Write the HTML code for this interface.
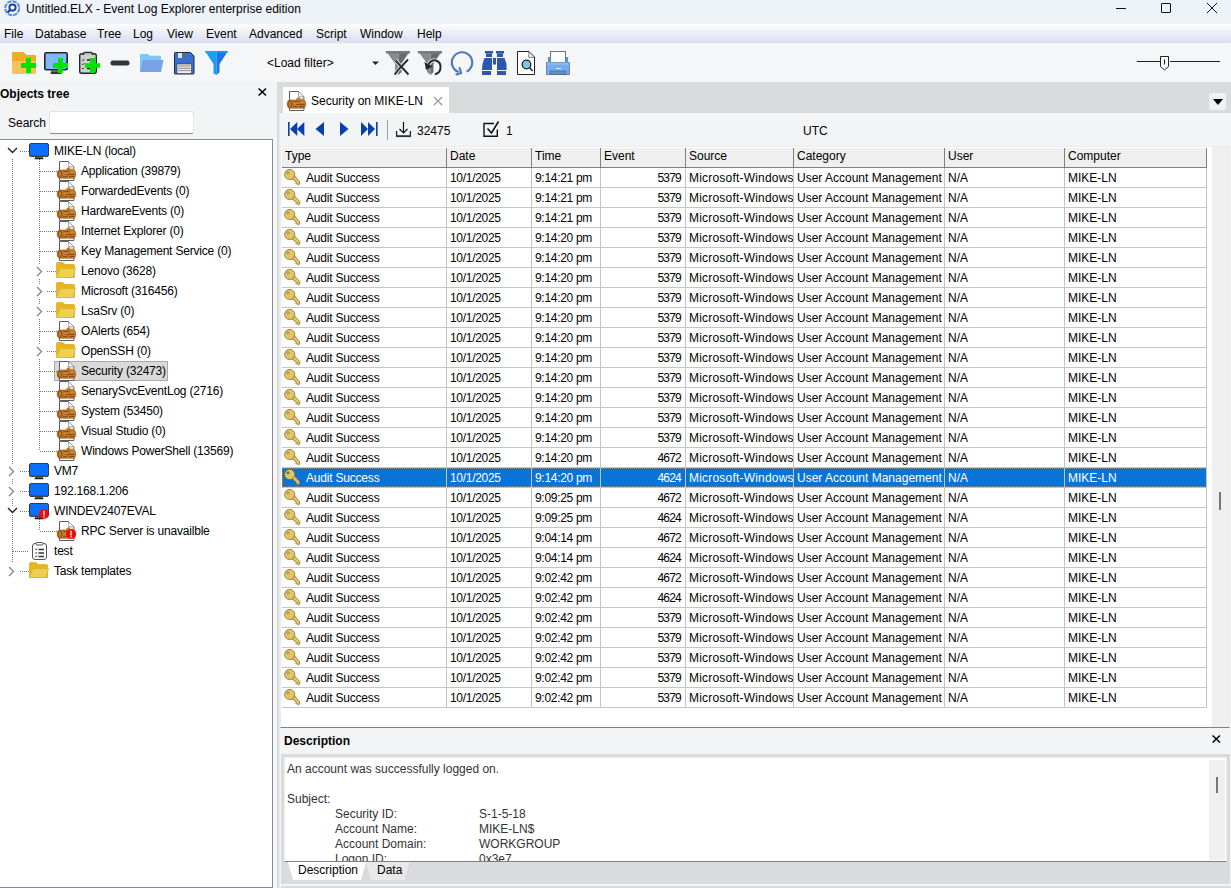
<!DOCTYPE html><html><head><meta charset="utf-8"><style>
*{box-sizing:border-box}
html,body{margin:0;padding:0}
body{width:1231px;height:888px;overflow:hidden;position:relative;background:#f3f4f6;font-family:"Liberation Sans", sans-serif;font-size:12px;color:#000}
.a{position:absolute}
.t{position:absolute;white-space:nowrap;line-height:14px}
.ic{position:absolute;overflow:visible}
</style></head><body>
<div class="a" style="left:0;top:0;width:1231px;height:24px;background:#eef2f9"></div>
<svg class="ic" style="left:3px;top:0px" width="20" height="20" viewBox="0 0 20 20"><circle cx="9.2" cy="8.2" r="7" fill="none" stroke="#5a8ed2" stroke-width="2" stroke-dasharray="4.6 0.9"/><circle cx="9.5" cy="7.6" r="3.1" fill="#fff" stroke="#1b3f9a" stroke-width="1.9"/><path d="M7.3 9.8 L4.6 12.6" stroke="#1b3f9a" stroke-width="2.1"/></svg>
<div class="t" style="left:26px;top:2px">Untitled.ELX - Event Log Explorer enterprise edition</div>
<div class="a" style="left:1116px;top:8px;width:10px;height:1px;background:#111"></div>
<div class="a" style="left:1161px;top:3px;width:10px;height:10px;border:1px solid #111;border-radius:1px"></div>
<svg class="ic" style="left:1206px;top:2px" width="12" height="12" viewBox="0 0 12 12"><path d="M1 1 L11 11 M11 1 L1 11" stroke="#111" stroke-width="1"/></svg>
<div class="a" style="left:0;top:24px;width:1231px;height:19px;background:linear-gradient(#ffffff,#f4f5fa 25%,#e6e9f4 65%,#d9ddef)"></div>
<div class="t" style="left:4px;top:27px">File</div>
<div class="t" style="left:35px;top:27px">Database</div>
<div class="t" style="left:97px;top:27px">Tree</div>
<div class="t" style="left:133px;top:27px">Log</div>
<div class="t" style="left:167px;top:27px">View</div>
<div class="t" style="left:206px;top:27px">Event</div>
<div class="t" style="left:249px;top:27px">Advanced</div>
<div class="t" style="left:316px;top:27px">Script</div>
<div class="t" style="left:360px;top:27px">Window</div>
<div class="t" style="left:417px;top:27px">Help</div>
<div class="a" style="left:0;top:43px;width:1231px;height:39px;background:#f5f6f7"></div>
<svg class="ic" style="left:0;top:43px" width="600" height="39" viewBox="0 43 600 39"><path d="M12 53.2 Q12 52 13.2 52 H23.5 L26.5 55 H34.8 Q36 55 36 56.2 V61 H12 Z" fill="#efac25"/><path d="M12 61 H36 V72.8 Q36 74 34.8 74 H13.2 Q12 74 12 72.8 Z" fill="#f5c55b"/><path d="M26 58 H31 V63 H36 V68 H31 V73 H26 V68 H21 V63 H26 Z" fill="#00e400"/><rect x="44.8" y="52.8" width="22.4" height="17" rx="1.5" fill="#80b7ff" stroke="#252525" stroke-width="1.6"/><rect x="51" y="70" width="10" height="2" fill="#666"/><rect x="50.5" y="72" width="11" height="2" rx="1" fill="#333"/><path d="M58 58 H63 V63 H68 V68 H63 V73 H58 V68 H53 V63 H58 Z" fill="#00e400"/><rect x="79.7" y="53.7" width="16.6" height="19.6" rx="2" fill="#cfcfcf" stroke="#252525" stroke-width="1.4"/><path d="M83.5 55 Q83.5 52.4 85 52.4 H91 Q92.5 52.4 92.5 55" fill="#bdbdbd" stroke="#252525" stroke-width="1.2"/><path d="M82 60 L83 60.8 L84.4 59 M82 64 L83 64.8 L84.4 63 M82 68.5 H84" stroke="#333" stroke-width="0.9" fill="none"/><path d="M87 60 H90 M87 68.5 H90" stroke="#222" stroke-width="1.3"/><path d="M90 58 H95 V63.2 H100 V67.8 H95 V73 H90 V67.8 H85 V63.2 H90 Z" fill="#00e400"/><rect x="110.5" y="60.5" width="19" height="5" rx="2.2" fill="#333"/><path d="M140 55 Q140 54 141 54 H148 L149.5 55.8 H160 Q161 55.8 161 56.8 V72 H140 Z" fill="#7cc6f7"/><path d="M143 60 H163.5 L161 72 H140 Z" fill="#78a2e6"/><path d="M174.5 53.3 Q174.5 52.5 175.3 52.5 H190.5 L194 56 V73.2 Q194 74 193.2 74 H175.3 Q174.5 74 174.5 73.2 Z" fill="#3a6ed0" stroke="#1f2a44" stroke-width="1"/><rect x="178" y="53" width="4" height="5" fill="#dfe6ee"/><rect x="182" y="53" width="3.5" height="5" fill="#5a6878"/><rect x="177" y="64" width="14.5" height="9.5" fill="#f0f0f0" stroke="#333" stroke-width="0.6"/><path d="M178 66 H190.5 M178 68.3 H190.5 M178 70.6 H190.5" stroke="#888" stroke-width="1"/><path d="M205 51 H216.5 V75 L213.5 73.5 V64 Z" fill="#1a9ef3"/><path d="M216.5 51 H228 L219.5 64 V72.3 L216.5 75 Z" fill="#1a74ec"/><rect x="205" y="51" width="23" height="2" fill="#16a8f0" opacity="0.6"/><path d="M372 61.5 H379 L375.5 65 Z" fill="#222"/><path d="M386 51 H398.5 V75 L395 72 V63.5 Z" fill="#8a8a8a"/><path d="M398.5 51 H410 L401.5 63.5 V72 L398.5 75 Z" fill="#6b6b6b"/><rect x="386" y="51" width="24" height="2.5" fill="#7a7a7a"/><path d="M395.5 60.5 L408.5 74.5 M408 59.5 L398 70 Q396.5 72.5 394.5 74.5" stroke="#f4f5f7" stroke-width="3.4" fill="none"/><path d="M395.5 60.5 L408.5 74.5 M408 59.5 L398 70 Q396.5 72.5 394.5 74.5" stroke="#2a2a2a" stroke-width="1.9" fill="none"/><path d="M418 51 H430.5 V75 L427 72 V63.5 Z" fill="#8a8a8a"/><path d="M430.5 51 H442 L433.5 63.5 V72 L430.5 75 Z" fill="#6b6b6b"/><rect x="418" y="51" width="24" height="2.5" fill="#7a7a7a"/><path d="M428.5 64.5 Q431 59.5 436 60.5 Q441 62 440.5 68 Q440 73 435 74.2" stroke="#f4f5f7" stroke-width="3.6" fill="none"/><path d="M428.5 64.5 Q431 59.5 436 60.5 Q441 62 440.5 68 Q440 73 435 74.2" stroke="#262626" stroke-width="2" fill="none"/><path d="M424.5 62 L432.5 66.5 L426 70 Z" fill="#262626"/><path d="M466.6 71.6 A10.2 10.2 0 1 0 458.7 72.1" stroke="#4c78bd" stroke-width="2.1" fill="none"/><path d="M459.4 67.2 L461.1 73 L455.6 74.8" stroke="#4c78bd" stroke-width="2.1" fill="none"/><g fill="#2a57ad"><rect x="485" y="51" width="8" height="2.5"/><rect x="486" y="53.5" width="6" height="3.5"/><rect x="496" y="51" width="8" height="2.5"/><rect x="497" y="53.5" width="6" height="3.5"/><path d="M484.5 58 H492 V70 H482 L482.5 64 Z"/><path d="M497 58 H504.5 L506.5 64 L506.5 70 H497 Z"/><rect x="493" y="58" width="3" height="6.5"/><rect x="482" y="71" width="9" height="4"/><rect x="497" y="71" width="9" height="4"/></g><path d="M517.5 51.5 H529 L534.5 57 V74.5 H517.5 Z" fill="#fff" stroke="#222" stroke-width="1"/><path d="M528.8 51.5 V57.3 H534.5" fill="none" stroke="#555" stroke-width="0.8"/><circle cx="526.5" cy="64.5" r="4.3" fill="#7cc7e6" stroke="#222" stroke-width="1.3"/><path d="M529.5 67.5 L532.5 71" stroke="#222" stroke-width="1.5"/><rect x="550.5" y="51.5" width="15" height="11" fill="#fff" stroke="#666" stroke-width="0.9"/><rect x="548" y="57" width="2.3" height="6" fill="#5f90d0"/><rect x="565.8" y="57" width="2.3" height="6" fill="#5f90d0"/><rect x="546.5" y="62.5" width="23" height="12" fill="#74acf3" stroke="#6f7f90" stroke-width="0.9"/><rect x="547" y="62.5" width="22" height="2.5" fill="#7fb9ff"/><rect x="550" y="71" width="16" height="3.5" fill="#5a8fd0" stroke="#456" stroke-width="0.5"/><rect x="556" y="68" width="5" height="1" fill="#dfeeff"/></svg>
<div class="t" style="left:267px;top:56px">&lt;Load filter&gt;</div>
<svg class="ic" style="left:1130px;top:50px" width="100" height="26" viewBox="1130 50 100 26"><path d="M1137 61.5 H1160 M1170 61.5 H1220" stroke="#222" stroke-width="1.2"/><path d="M1160.5 56.5 H1168.5 V66.5 L1164.5 70 L1160.5 66.5 Z" fill="#fff" stroke="#222" stroke-width="1"/><path d="M1164.5 59.5 V64.5" stroke="#222" stroke-width="1.2"/></svg>
<div class="t" style="left:0;top:87px;font-weight:bold;font-size:12px">Objects tree</div>
<svg class="ic" style="left:258px;top:88px" width="9" height="8" viewBox="0 0 9 8"><path d="M0.6 0.5 L8 7.5 M8 0.5 L0.6 7.5" stroke="#000" stroke-width="1.5"/></svg>
<div class="t" style="left:8px;top:116px">Search</div>
<div class="a" style="left:49px;top:111px;width:145px;height:23px;background:#fff;border:1px solid #e3e3e3;border-bottom:1px solid #8a8a8a;border-radius:3px"></div>
<div class="a" style="left:-1px;top:139px;width:274px;height:749px;background:#fff;border:1px solid #848993"></div><div class="a" style="left:273px;top:139px;width:1px;height:749px;background:#fafbfb"></div>
<div class="a" style="left:12px;top:159px;width:1px;height:403px;background:repeating-linear-gradient(180deg,#777 0 1px,transparent 1px 2px)"></div>
<div class="a" style="left:39px;top:159px;width:1px;height:292px;background:repeating-linear-gradient(180deg,#777 0 1px,transparent 1px 2px)"></div>
<div class="a" style="left:39px;top:519px;width:1px;height:12px;background:repeating-linear-gradient(180deg,#777 0 1px,transparent 1px 2px)"></div>
<div class="a" style="left:20px;top:151px;width:9px;height:1px;background:repeating-linear-gradient(90deg,#777 0 1px,transparent 1px 2px)"></div>
<div class="a" style="left:7px;top:146px;width:11px;height:9px;background:#fff"></div>
<svg class="ic" style="left:7px;top:147px" width="11" height="7" viewBox="0 0 11 7"><path d="M1 1 L5.5 5.5 L10 1" fill="none" stroke="#222" stroke-width="1.4"/></svg>
<svg class="ic" style="left:29px;top:143px" width="20" height="17"><rect x="0.5" y="0.5" width="19" height="13" rx="1.5" fill="#0a6ffa" stroke="#3a3a3a" stroke-width="1"/><rect x="1" y="12.5" width="18" height="1.5" fill="#444"/><rect x="6" y="14" width="8" height="1.5" fill="#555"/><rect x="5.5" y="15" width="9" height="1.3" rx="0.6" fill="#222"/></svg>
<div class="t" style="left:54px;top:144px;letter-spacing:-0.2px">MIKE-LN (local)</div>
<div class="a" style="left:40px;top:171px;width:17px;height:1px;background:repeating-linear-gradient(90deg,#777 0 1px,transparent 1px 2px)"></div>
<svg class="ic" style="left:57px;top:161px" width="20" height="20"><path d="M2.5 0.5 H11.6 L16.9 5.8 V19.5 H2.5 Z" fill="#fff" stroke="#5e5e5e" stroke-width="1"/><path d="M11.6 0.8 V5.8 H16.6" fill="#fff" stroke="#8a8a8a" stroke-width="0.8"/><path d="M3.2 9 H16 Q18.8 9 18.8 13.1 Q18.8 17.3 16 17.3 H3.2 Q0.2 17.3 0.2 13.1 Q0.2 9 3.2 9 Z" fill="#c07a2a" stroke="#96591c" stroke-width="0.6"/><path d="M8.5 9.3 L10 7 L12.3 6 L13.6 8 L15.6 7.6 L16 9.3 Z" fill="#c07a2a"/><ellipse cx="3" cy="13.1" rx="2" ry="3.4" fill="none" stroke="#7a4512" stroke-width="0.9"/><path d="M6.3 10.7 H12.5 M9 13.4 H17.5 M6 15.7 H10.3 M12.2 15.6 H17.4" stroke="#7a4512" stroke-width="0.9"/><path d="M6.5 12.2 H11.5 M13 11.2 H17" stroke="#dc9a4a" stroke-width="0.7"/></svg>
<div class="t" style="left:81px;top:164px;letter-spacing:-0.2px">Application (39879)</div>
<div class="a" style="left:40px;top:191px;width:17px;height:1px;background:repeating-linear-gradient(90deg,#777 0 1px,transparent 1px 2px)"></div>
<svg class="ic" style="left:57px;top:181px" width="20" height="20"><path d="M2.5 0.5 H11.6 L16.9 5.8 V19.5 H2.5 Z" fill="#fff" stroke="#5e5e5e" stroke-width="1"/><path d="M11.6 0.8 V5.8 H16.6" fill="#fff" stroke="#8a8a8a" stroke-width="0.8"/><path d="M3.2 9 H16 Q18.8 9 18.8 13.1 Q18.8 17.3 16 17.3 H3.2 Q0.2 17.3 0.2 13.1 Q0.2 9 3.2 9 Z" fill="#c07a2a" stroke="#96591c" stroke-width="0.6"/><path d="M8.5 9.3 L10 7 L12.3 6 L13.6 8 L15.6 7.6 L16 9.3 Z" fill="#c07a2a"/><ellipse cx="3" cy="13.1" rx="2" ry="3.4" fill="none" stroke="#7a4512" stroke-width="0.9"/><path d="M6.3 10.7 H12.5 M9 13.4 H17.5 M6 15.7 H10.3 M12.2 15.6 H17.4" stroke="#7a4512" stroke-width="0.9"/><path d="M6.5 12.2 H11.5 M13 11.2 H17" stroke="#dc9a4a" stroke-width="0.7"/></svg>
<div class="t" style="left:81px;top:184px;letter-spacing:-0.2px">ForwardedEvents (0)</div>
<div class="a" style="left:40px;top:211px;width:17px;height:1px;background:repeating-linear-gradient(90deg,#777 0 1px,transparent 1px 2px)"></div>
<svg class="ic" style="left:57px;top:201px" width="20" height="20"><path d="M2.5 0.5 H11.6 L16.9 5.8 V19.5 H2.5 Z" fill="#fff" stroke="#5e5e5e" stroke-width="1"/><path d="M11.6 0.8 V5.8 H16.6" fill="#fff" stroke="#8a8a8a" stroke-width="0.8"/><path d="M3.2 9 H16 Q18.8 9 18.8 13.1 Q18.8 17.3 16 17.3 H3.2 Q0.2 17.3 0.2 13.1 Q0.2 9 3.2 9 Z" fill="#c07a2a" stroke="#96591c" stroke-width="0.6"/><path d="M8.5 9.3 L10 7 L12.3 6 L13.6 8 L15.6 7.6 L16 9.3 Z" fill="#c07a2a"/><ellipse cx="3" cy="13.1" rx="2" ry="3.4" fill="none" stroke="#7a4512" stroke-width="0.9"/><path d="M6.3 10.7 H12.5 M9 13.4 H17.5 M6 15.7 H10.3 M12.2 15.6 H17.4" stroke="#7a4512" stroke-width="0.9"/><path d="M6.5 12.2 H11.5 M13 11.2 H17" stroke="#dc9a4a" stroke-width="0.7"/></svg>
<div class="t" style="left:81px;top:204px;letter-spacing:-0.2px">HardwareEvents (0)</div>
<div class="a" style="left:40px;top:231px;width:17px;height:1px;background:repeating-linear-gradient(90deg,#777 0 1px,transparent 1px 2px)"></div>
<svg class="ic" style="left:57px;top:221px" width="20" height="20"><path d="M2.5 0.5 H11.6 L16.9 5.8 V19.5 H2.5 Z" fill="#fff" stroke="#5e5e5e" stroke-width="1"/><path d="M11.6 0.8 V5.8 H16.6" fill="#fff" stroke="#8a8a8a" stroke-width="0.8"/><path d="M3.2 9 H16 Q18.8 9 18.8 13.1 Q18.8 17.3 16 17.3 H3.2 Q0.2 17.3 0.2 13.1 Q0.2 9 3.2 9 Z" fill="#c07a2a" stroke="#96591c" stroke-width="0.6"/><path d="M8.5 9.3 L10 7 L12.3 6 L13.6 8 L15.6 7.6 L16 9.3 Z" fill="#c07a2a"/><ellipse cx="3" cy="13.1" rx="2" ry="3.4" fill="none" stroke="#7a4512" stroke-width="0.9"/><path d="M6.3 10.7 H12.5 M9 13.4 H17.5 M6 15.7 H10.3 M12.2 15.6 H17.4" stroke="#7a4512" stroke-width="0.9"/><path d="M6.5 12.2 H11.5 M13 11.2 H17" stroke="#dc9a4a" stroke-width="0.7"/></svg>
<div class="t" style="left:81px;top:224px;letter-spacing:-0.2px">Internet Explorer (0)</div>
<div class="a" style="left:40px;top:251px;width:17px;height:1px;background:repeating-linear-gradient(90deg,#777 0 1px,transparent 1px 2px)"></div>
<svg class="ic" style="left:57px;top:241px" width="20" height="20"><path d="M2.5 0.5 H11.6 L16.9 5.8 V19.5 H2.5 Z" fill="#fff" stroke="#5e5e5e" stroke-width="1"/><path d="M11.6 0.8 V5.8 H16.6" fill="#fff" stroke="#8a8a8a" stroke-width="0.8"/><path d="M3.2 9 H16 Q18.8 9 18.8 13.1 Q18.8 17.3 16 17.3 H3.2 Q0.2 17.3 0.2 13.1 Q0.2 9 3.2 9 Z" fill="#c07a2a" stroke="#96591c" stroke-width="0.6"/><path d="M8.5 9.3 L10 7 L12.3 6 L13.6 8 L15.6 7.6 L16 9.3 Z" fill="#c07a2a"/><ellipse cx="3" cy="13.1" rx="2" ry="3.4" fill="none" stroke="#7a4512" stroke-width="0.9"/><path d="M6.3 10.7 H12.5 M9 13.4 H17.5 M6 15.7 H10.3 M12.2 15.6 H17.4" stroke="#7a4512" stroke-width="0.9"/><path d="M6.5 12.2 H11.5 M13 11.2 H17" stroke="#dc9a4a" stroke-width="0.7"/></svg>
<div class="t" style="left:81px;top:244px;letter-spacing:-0.2px">Key Management Service (0)</div>
<div class="a" style="left:47px;top:271px;width:10px;height:1px;background:repeating-linear-gradient(90deg,#777 0 1px,transparent 1px 2px)"></div>
<div class="a" style="left:35px;top:265px;width:9px;height:13px;background:#fff"></div>
<svg class="ic" style="left:36px;top:266px" width="7" height="11" viewBox="0 0 7 11"><path d="M1 1 L5.5 5.5 L1 10" fill="none" stroke="#888" stroke-width="1.4"/></svg>
<svg class="ic" style="left:56px;top:262px" width="20" height="17"><path d="M0.5 1.5 Q0.5 0.5 1.5 0.5 H7 L9 2.5 H17.5 Q18.5 2.5 18.5 3.5 V15.5 H0.5 Z" fill="#e8b617" stroke="#cfa013" stroke-width="0.6"/><path d="M4 6.5 H19.5 L17 15.5 H0.5 Z" fill="#edd050" stroke="#d4ae2a" stroke-width="0.6"/></svg>
<div class="t" style="left:81px;top:264px;letter-spacing:-0.2px">Lenovo (3628)</div>
<div class="a" style="left:47px;top:291px;width:10px;height:1px;background:repeating-linear-gradient(90deg,#777 0 1px,transparent 1px 2px)"></div>
<div class="a" style="left:35px;top:285px;width:9px;height:13px;background:#fff"></div>
<svg class="ic" style="left:36px;top:286px" width="7" height="11" viewBox="0 0 7 11"><path d="M1 1 L5.5 5.5 L1 10" fill="none" stroke="#888" stroke-width="1.4"/></svg>
<svg class="ic" style="left:56px;top:282px" width="20" height="17"><path d="M0.5 1.5 Q0.5 0.5 1.5 0.5 H7 L9 2.5 H17.5 Q18.5 2.5 18.5 3.5 V15.5 H0.5 Z" fill="#e8b617" stroke="#cfa013" stroke-width="0.6"/><path d="M4 6.5 H19.5 L17 15.5 H0.5 Z" fill="#edd050" stroke="#d4ae2a" stroke-width="0.6"/></svg>
<div class="t" style="left:81px;top:284px;letter-spacing:-0.2px">Microsoft (316456)</div>
<div class="a" style="left:47px;top:311px;width:10px;height:1px;background:repeating-linear-gradient(90deg,#777 0 1px,transparent 1px 2px)"></div>
<div class="a" style="left:35px;top:305px;width:9px;height:13px;background:#fff"></div>
<svg class="ic" style="left:36px;top:306px" width="7" height="11" viewBox="0 0 7 11"><path d="M1 1 L5.5 5.5 L1 10" fill="none" stroke="#888" stroke-width="1.4"/></svg>
<svg class="ic" style="left:56px;top:302px" width="20" height="17"><path d="M0.5 1.5 Q0.5 0.5 1.5 0.5 H7 L9 2.5 H17.5 Q18.5 2.5 18.5 3.5 V15.5 H0.5 Z" fill="#e8b617" stroke="#cfa013" stroke-width="0.6"/><path d="M4 6.5 H19.5 L17 15.5 H0.5 Z" fill="#edd050" stroke="#d4ae2a" stroke-width="0.6"/></svg>
<div class="t" style="left:81px;top:304px;letter-spacing:-0.2px">LsaSrv (0)</div>
<div class="a" style="left:40px;top:331px;width:17px;height:1px;background:repeating-linear-gradient(90deg,#777 0 1px,transparent 1px 2px)"></div>
<svg class="ic" style="left:57px;top:321px" width="20" height="20"><path d="M2.5 0.5 H11.6 L16.9 5.8 V19.5 H2.5 Z" fill="#fff" stroke="#5e5e5e" stroke-width="1"/><path d="M11.6 0.8 V5.8 H16.6" fill="#fff" stroke="#8a8a8a" stroke-width="0.8"/><path d="M3.2 9 H16 Q18.8 9 18.8 13.1 Q18.8 17.3 16 17.3 H3.2 Q0.2 17.3 0.2 13.1 Q0.2 9 3.2 9 Z" fill="#c07a2a" stroke="#96591c" stroke-width="0.6"/><path d="M8.5 9.3 L10 7 L12.3 6 L13.6 8 L15.6 7.6 L16 9.3 Z" fill="#c07a2a"/><ellipse cx="3" cy="13.1" rx="2" ry="3.4" fill="none" stroke="#7a4512" stroke-width="0.9"/><path d="M6.3 10.7 H12.5 M9 13.4 H17.5 M6 15.7 H10.3 M12.2 15.6 H17.4" stroke="#7a4512" stroke-width="0.9"/><path d="M6.5 12.2 H11.5 M13 11.2 H17" stroke="#dc9a4a" stroke-width="0.7"/></svg>
<div class="t" style="left:81px;top:324px;letter-spacing:-0.2px">OAlerts (654)</div>
<div class="a" style="left:47px;top:351px;width:10px;height:1px;background:repeating-linear-gradient(90deg,#777 0 1px,transparent 1px 2px)"></div>
<div class="a" style="left:35px;top:345px;width:9px;height:13px;background:#fff"></div>
<svg class="ic" style="left:36px;top:346px" width="7" height="11" viewBox="0 0 7 11"><path d="M1 1 L5.5 5.5 L1 10" fill="none" stroke="#888" stroke-width="1.4"/></svg>
<svg class="ic" style="left:56px;top:342px" width="20" height="17"><path d="M0.5 1.5 Q0.5 0.5 1.5 0.5 H7 L9 2.5 H17.5 Q18.5 2.5 18.5 3.5 V15.5 H0.5 Z" fill="#e8b617" stroke="#cfa013" stroke-width="0.6"/><path d="M4 6.5 H19.5 L17 15.5 H0.5 Z" fill="#edd050" stroke="#d4ae2a" stroke-width="0.6"/></svg>
<div class="t" style="left:81px;top:344px;letter-spacing:-0.2px">OpenSSH (0)</div>
<div class="a" style="left:54px;top:361px;width:114px;height:20px;background:#d9d9d9;border:1px solid #a9a9a9"></div>
<div class="a" style="left:40px;top:371px;width:17px;height:1px;background:repeating-linear-gradient(90deg,#777 0 1px,transparent 1px 2px)"></div>
<svg class="ic" style="left:57px;top:361px" width="20" height="20"><path d="M2.5 0.5 H11.6 L16.9 5.8 V19.5 H2.5 Z" fill="#fff" stroke="#5e5e5e" stroke-width="1"/><path d="M11.6 0.8 V5.8 H16.6" fill="#fff" stroke="#8a8a8a" stroke-width="0.8"/><path d="M3.2 9 H16 Q18.8 9 18.8 13.1 Q18.8 17.3 16 17.3 H3.2 Q0.2 17.3 0.2 13.1 Q0.2 9 3.2 9 Z" fill="#c07a2a" stroke="#96591c" stroke-width="0.6"/><path d="M8.5 9.3 L10 7 L12.3 6 L13.6 8 L15.6 7.6 L16 9.3 Z" fill="#c07a2a"/><ellipse cx="3" cy="13.1" rx="2" ry="3.4" fill="none" stroke="#7a4512" stroke-width="0.9"/><path d="M6.3 10.7 H12.5 M9 13.4 H17.5 M6 15.7 H10.3 M12.2 15.6 H17.4" stroke="#7a4512" stroke-width="0.9"/><path d="M6.5 12.2 H11.5 M13 11.2 H17" stroke="#dc9a4a" stroke-width="0.7"/></svg>
<div class="t" style="left:81px;top:364px;letter-spacing:-0.2px">Security (32473)</div>
<div class="a" style="left:40px;top:391px;width:17px;height:1px;background:repeating-linear-gradient(90deg,#777 0 1px,transparent 1px 2px)"></div>
<svg class="ic" style="left:57px;top:381px" width="20" height="20"><path d="M2.5 0.5 H11.6 L16.9 5.8 V19.5 H2.5 Z" fill="#fff" stroke="#5e5e5e" stroke-width="1"/><path d="M11.6 0.8 V5.8 H16.6" fill="#fff" stroke="#8a8a8a" stroke-width="0.8"/><path d="M3.2 9 H16 Q18.8 9 18.8 13.1 Q18.8 17.3 16 17.3 H3.2 Q0.2 17.3 0.2 13.1 Q0.2 9 3.2 9 Z" fill="#c07a2a" stroke="#96591c" stroke-width="0.6"/><path d="M8.5 9.3 L10 7 L12.3 6 L13.6 8 L15.6 7.6 L16 9.3 Z" fill="#c07a2a"/><ellipse cx="3" cy="13.1" rx="2" ry="3.4" fill="none" stroke="#7a4512" stroke-width="0.9"/><path d="M6.3 10.7 H12.5 M9 13.4 H17.5 M6 15.7 H10.3 M12.2 15.6 H17.4" stroke="#7a4512" stroke-width="0.9"/><path d="M6.5 12.2 H11.5 M13 11.2 H17" stroke="#dc9a4a" stroke-width="0.7"/></svg>
<div class="t" style="left:81px;top:384px;letter-spacing:-0.2px">SenarySvcEventLog (2716)</div>
<div class="a" style="left:40px;top:411px;width:17px;height:1px;background:repeating-linear-gradient(90deg,#777 0 1px,transparent 1px 2px)"></div>
<svg class="ic" style="left:57px;top:401px" width="20" height="20"><path d="M2.5 0.5 H11.6 L16.9 5.8 V19.5 H2.5 Z" fill="#fff" stroke="#5e5e5e" stroke-width="1"/><path d="M11.6 0.8 V5.8 H16.6" fill="#fff" stroke="#8a8a8a" stroke-width="0.8"/><path d="M3.2 9 H16 Q18.8 9 18.8 13.1 Q18.8 17.3 16 17.3 H3.2 Q0.2 17.3 0.2 13.1 Q0.2 9 3.2 9 Z" fill="#c07a2a" stroke="#96591c" stroke-width="0.6"/><path d="M8.5 9.3 L10 7 L12.3 6 L13.6 8 L15.6 7.6 L16 9.3 Z" fill="#c07a2a"/><ellipse cx="3" cy="13.1" rx="2" ry="3.4" fill="none" stroke="#7a4512" stroke-width="0.9"/><path d="M6.3 10.7 H12.5 M9 13.4 H17.5 M6 15.7 H10.3 M12.2 15.6 H17.4" stroke="#7a4512" stroke-width="0.9"/><path d="M6.5 12.2 H11.5 M13 11.2 H17" stroke="#dc9a4a" stroke-width="0.7"/></svg>
<div class="t" style="left:81px;top:404px;letter-spacing:-0.2px">System (53450)</div>
<div class="a" style="left:40px;top:431px;width:17px;height:1px;background:repeating-linear-gradient(90deg,#777 0 1px,transparent 1px 2px)"></div>
<svg class="ic" style="left:57px;top:421px" width="20" height="20"><path d="M2.5 0.5 H11.6 L16.9 5.8 V19.5 H2.5 Z" fill="#fff" stroke="#5e5e5e" stroke-width="1"/><path d="M11.6 0.8 V5.8 H16.6" fill="#fff" stroke="#8a8a8a" stroke-width="0.8"/><path d="M3.2 9 H16 Q18.8 9 18.8 13.1 Q18.8 17.3 16 17.3 H3.2 Q0.2 17.3 0.2 13.1 Q0.2 9 3.2 9 Z" fill="#c07a2a" stroke="#96591c" stroke-width="0.6"/><path d="M8.5 9.3 L10 7 L12.3 6 L13.6 8 L15.6 7.6 L16 9.3 Z" fill="#c07a2a"/><ellipse cx="3" cy="13.1" rx="2" ry="3.4" fill="none" stroke="#7a4512" stroke-width="0.9"/><path d="M6.3 10.7 H12.5 M9 13.4 H17.5 M6 15.7 H10.3 M12.2 15.6 H17.4" stroke="#7a4512" stroke-width="0.9"/><path d="M6.5 12.2 H11.5 M13 11.2 H17" stroke="#dc9a4a" stroke-width="0.7"/></svg>
<div class="t" style="left:81px;top:424px;letter-spacing:-0.2px">Visual Studio (0)</div>
<div class="a" style="left:40px;top:451px;width:17px;height:1px;background:repeating-linear-gradient(90deg,#777 0 1px,transparent 1px 2px)"></div>
<svg class="ic" style="left:57px;top:441px" width="20" height="20"><path d="M2.5 0.5 H11.6 L16.9 5.8 V19.5 H2.5 Z" fill="#fff" stroke="#5e5e5e" stroke-width="1"/><path d="M11.6 0.8 V5.8 H16.6" fill="#fff" stroke="#8a8a8a" stroke-width="0.8"/><path d="M3.2 9 H16 Q18.8 9 18.8 13.1 Q18.8 17.3 16 17.3 H3.2 Q0.2 17.3 0.2 13.1 Q0.2 9 3.2 9 Z" fill="#c07a2a" stroke="#96591c" stroke-width="0.6"/><path d="M8.5 9.3 L10 7 L12.3 6 L13.6 8 L15.6 7.6 L16 9.3 Z" fill="#c07a2a"/><ellipse cx="3" cy="13.1" rx="2" ry="3.4" fill="none" stroke="#7a4512" stroke-width="0.9"/><path d="M6.3 10.7 H12.5 M9 13.4 H17.5 M6 15.7 H10.3 M12.2 15.6 H17.4" stroke="#7a4512" stroke-width="0.9"/><path d="M6.5 12.2 H11.5 M13 11.2 H17" stroke="#dc9a4a" stroke-width="0.7"/></svg>
<div class="t" style="left:81px;top:444px;letter-spacing:-0.2px">Windows PowerShell (13569)</div>
<div class="a" style="left:20px;top:471px;width:9px;height:1px;background:repeating-linear-gradient(90deg,#777 0 1px,transparent 1px 2px)"></div>
<div class="a" style="left:7px;top:465px;width:9px;height:13px;background:#fff"></div>
<svg class="ic" style="left:8px;top:466px" width="7" height="11" viewBox="0 0 7 11"><path d="M1 1 L5.5 5.5 L1 10" fill="none" stroke="#888" stroke-width="1.4"/></svg>
<svg class="ic" style="left:29px;top:463px" width="20" height="17"><rect x="0.5" y="0.5" width="19" height="13" rx="1.5" fill="#0a6ffa" stroke="#3a3a3a" stroke-width="1"/><rect x="1" y="12.5" width="18" height="1.5" fill="#444"/><rect x="6" y="14" width="8" height="1.5" fill="#555"/><rect x="5.5" y="15" width="9" height="1.3" rx="0.6" fill="#222"/></svg>
<div class="t" style="left:54px;top:464px;letter-spacing:-0.2px">VM7</div>
<div class="a" style="left:20px;top:491px;width:9px;height:1px;background:repeating-linear-gradient(90deg,#777 0 1px,transparent 1px 2px)"></div>
<div class="a" style="left:7px;top:485px;width:9px;height:13px;background:#fff"></div>
<svg class="ic" style="left:8px;top:486px" width="7" height="11" viewBox="0 0 7 11"><path d="M1 1 L5.5 5.5 L1 10" fill="none" stroke="#888" stroke-width="1.4"/></svg>
<svg class="ic" style="left:29px;top:483px" width="20" height="17"><rect x="0.5" y="0.5" width="19" height="13" rx="1.5" fill="#0a6ffa" stroke="#3a3a3a" stroke-width="1"/><rect x="1" y="12.5" width="18" height="1.5" fill="#444"/><rect x="6" y="14" width="8" height="1.5" fill="#555"/><rect x="5.5" y="15" width="9" height="1.3" rx="0.6" fill="#222"/></svg>
<div class="t" style="left:54px;top:484px;letter-spacing:-0.2px">192.168.1.206</div>
<div class="a" style="left:20px;top:511px;width:9px;height:1px;background:repeating-linear-gradient(90deg,#777 0 1px,transparent 1px 2px)"></div>
<div class="a" style="left:7px;top:506px;width:11px;height:9px;background:#fff"></div>
<svg class="ic" style="left:7px;top:507px" width="11" height="7" viewBox="0 0 11 7"><path d="M1 1 L5.5 5.5 L10 1" fill="none" stroke="#222" stroke-width="1.4"/></svg>
<svg class="ic" style="left:29px;top:503px" width="20" height="17"><rect x="0.5" y="0.5" width="19" height="13" rx="1.5" fill="#0a6ffa" stroke="#3a3a3a" stroke-width="1"/><rect x="1" y="12.5" width="18" height="1.5" fill="#444"/><rect x="6" y="14" width="8" height="1.5" fill="#555"/><rect x="5.5" y="15" width="9" height="1.3" rx="0.6" fill="#222"/></svg>
<svg class="ic" style="left:39px;top:509px" width="10" height="10"><circle cx="5" cy="5" r="5" fill="#f50a0a"/><rect x="4.35" y="1.6" width="1.3" height="4.8" rx="0.5" fill="#fff"/><rect x="4.35" y="7.2" width="1.3" height="1.4" fill="#fff"/></svg>
<div class="t" style="left:54px;top:504px;letter-spacing:-0.2px">WINDEV2407EVAL</div>
<div class="a" style="left:40px;top:531px;width:17px;height:1px;background:repeating-linear-gradient(90deg,#777 0 1px,transparent 1px 2px)"></div>
<svg class="ic" style="left:57px;top:521px" width="20" height="20"><path d="M2.5 0.5 H11.6 L16.9 5.8 V19.5 H2.5 Z" fill="#fff" stroke="#5e5e5e" stroke-width="1"/><path d="M11.6 0.8 V5.8 H16.6" fill="#fff" stroke="#8a8a8a" stroke-width="0.8"/><path d="M3.2 9 H16 Q18.8 9 18.8 13.1 Q18.8 17.3 16 17.3 H3.2 Q0.2 17.3 0.2 13.1 Q0.2 9 3.2 9 Z" fill="#c07a2a" stroke="#96591c" stroke-width="0.6"/><path d="M8.5 9.3 L10 7 L12.3 6 L13.6 8 L15.6 7.6 L16 9.3 Z" fill="#c07a2a"/><ellipse cx="3" cy="13.1" rx="2" ry="3.4" fill="none" stroke="#7a4512" stroke-width="0.9"/><path d="M6.3 10.7 H12.5 M9 13.4 H17.5 M6 15.7 H10.3 M12.2 15.6 H17.4" stroke="#7a4512" stroke-width="0.9"/><path d="M6.5 12.2 H11.5 M13 11.2 H17" stroke="#dc9a4a" stroke-width="0.7"/></svg>
<svg class="ic" style="left:66px;top:529px" width="10" height="10"><circle cx="5" cy="5" r="5" fill="#f50a0a"/><rect x="4.35" y="1.6" width="1.3" height="4.8" rx="0.5" fill="#fff"/><rect x="4.35" y="7.2" width="1.3" height="1.4" fill="#fff"/></svg>
<div class="t" style="left:81px;top:524px;letter-spacing:-0.2px">RPC Server is unavailble</div>
<div class="a" style="left:13px;top:551px;width:16px;height:1px;background:repeating-linear-gradient(90deg,#777 0 1px,transparent 1px 2px)"></div>
<svg class="ic" style="left:31px;top:542px" width="17" height="19"><rect x="1.5" y="1.5" width="14" height="16" rx="2.5" fill="#fff" stroke="#555" stroke-width="1"/><rect x="5" y="0.5" width="7" height="2.5" rx="1" fill="#fff" stroke="#555" stroke-width="1"/><path d="M4 7 L5 8 L6 6.5 M4 10.5 L5 11.5 L6 10 M4 14 L5 15 L6 13.5" stroke="#333" stroke-width="0.8" fill="none"/><path d="M7.5 7.5 H13 M7.5 11 H13 M7.5 14.5 H13" stroke="#333" stroke-width="1.4"/></svg>
<div class="t" style="left:54px;top:544px;letter-spacing:-0.2px">test</div>
<div class="a" style="left:20px;top:571px;width:9px;height:1px;background:repeating-linear-gradient(90deg,#777 0 1px,transparent 1px 2px)"></div>
<div class="a" style="left:7px;top:565px;width:9px;height:13px;background:#fff"></div>
<svg class="ic" style="left:8px;top:566px" width="7" height="11" viewBox="0 0 7 11"><path d="M1 1 L5.5 5.5 L1 10" fill="none" stroke="#888" stroke-width="1.4"/></svg>
<svg class="ic" style="left:29px;top:562px" width="20" height="17"><path d="M0.5 1.5 Q0.5 0.5 1.5 0.5 H7 L9 2.5 H17.5 Q18.5 2.5 18.5 3.5 V15.5 H0.5 Z" fill="#e8b617" stroke="#cfa013" stroke-width="0.6"/><path d="M4 6.5 H19.5 L17 15.5 H0.5 Z" fill="#edd050" stroke="#d4ae2a" stroke-width="0.6"/></svg>
<div class="t" style="left:54px;top:564px;letter-spacing:-0.2px">Task templates</div>
<div class="a" style="left:277px;top:82px;width:954px;height:31px;background:#dadbdd"></div>
<div class="a" style="left:283px;top:87px;width:166px;height:26px;background:#fff"></div>
<div class="t" style="left:311px;top:94px">Security on MIKE-LN</div>
<svg class="ic" style="left:433px;top:96px" width="10" height="10" viewBox="0 0 10 10"><path d="M1 1 L9 9 M9 1 L1 9" stroke="#9a9a9a" stroke-width="1.3"/></svg>
<div class="a" style="left:1209px;top:93px;width:17px;height:17px;background:#f0f1f3;border-radius:2px"></div>
<svg class="ic" style="left:1212px;top:99px" width="12" height="7" viewBox="0 0 12 7"><path d="M1 0 L11 0 L6 6 Z" fill="#000"/></svg>
<div class="a" style="left:277px;top:113px;width:954px;height:775px;background:#f3f4f6;border-left:2px solid #dadbdd"></div><div class="a" style="left:279px;top:113px;width:1px;height:775px;background:#ececec"></div>
<svg class="ic" style="left:280px;top:112px" width="240" height="34" viewBox="280 112 240 34"><g fill="#0a40ad"><rect x="288" y="122" width="1.6" height="14"/><path d="M290 129 L297.3 122 V136 Z"/><path d="M297 129 L304.3 122 V136 Z"/><path d="M315.5 129 L324 122 V136 Z"/><path d="M340 122 L348.5 129 L340 136 Z"/><path d="M361 122 L368 129 L361 136 Z"/><path d="M368 122 L375 129 L368 136 Z"/><rect x="376" y="122" width="1.6" height="14"/></g><path d="M403.5 122 V133 M399.5 129 L403.5 133 L407.5 129" stroke="#111" stroke-width="1.2" fill="none"/><path d="M396.6 131 V136.3 H410.4 V131" stroke="#222" stroke-width="1.3" fill="none"/><rect x="396" y="135.3" width="15" height="1.8" fill="#333"/><path d="M494 123.5 H484 V136.3 H497.3 V129.5" stroke="#111" stroke-width="1.4" fill="none"/><path d="M487.5 128.5 L491.5 133 L498.5 121.5" stroke="#111" stroke-width="1.6" fill="none"/></svg>
<svg class="ic" style="left:287px;top:91px" width="20" height="20"><path d="M2.5 0.5 H11.6 L16.9 5.8 V19.5 H2.5 Z" fill="#fff" stroke="#5e5e5e" stroke-width="1"/><path d="M11.6 0.8 V5.8 H16.6" fill="#fff" stroke="#8a8a8a" stroke-width="0.8"/><path d="M3.2 9 H16 Q18.8 9 18.8 13.1 Q18.8 17.3 16 17.3 H3.2 Q0.2 17.3 0.2 13.1 Q0.2 9 3.2 9 Z" fill="#c07a2a" stroke="#96591c" stroke-width="0.6"/><path d="M8.5 9.3 L10 7 L12.3 6 L13.6 8 L15.6 7.6 L16 9.3 Z" fill="#c07a2a"/><ellipse cx="3" cy="13.1" rx="2" ry="3.4" fill="none" stroke="#7a4512" stroke-width="0.9"/><path d="M6.3 10.7 H12.5 M9 13.4 H17.5 M6 15.7 H10.3 M12.2 15.6 H17.4" stroke="#7a4512" stroke-width="0.9"/><path d="M6.5 12.2 H11.5 M13 11.2 H17" stroke="#dc9a4a" stroke-width="0.7"/></svg>
<div class="t" style="left:417px;top:124px">32475</div>
<div class="t" style="left:506px;top:124px">1</div>
<div class="t" style="left:803px;top:124px">UTC</div>
<div class="a" style="left:387px;top:120px;width:1px;height:20px;background:#a0a0a0"></div>
<div class="a" style="left:280px;top:146px;width:950px;height:582px;background:#fff;border:1px solid #ebebeb;border-bottom:1px solid #808080"></div>
<div class="a" style="left:1212px;top:147px;width:17px;height:580px;background:#efefef"></div>
<div class="a" style="left:1219px;top:492px;width:2px;height:18px;background:#777"></div>
<div class="a" style="left:282px;top:148px;width:925px;height:20px;background:#efefef;border-bottom:1px solid #808080"></div>
<div class="t" style="left:285px;top:149px">Type</div>
<div class="t" style="left:450px;top:149px">Date</div>
<div class="t" style="left:535px;top:149px">Time</div>
<div class="t" style="left:604px;top:149px">Event</div>
<div class="t" style="left:689px;top:149px">Source</div>
<div class="t" style="left:797px;top:149px">Category</div>
<div class="t" style="left:948px;top:149px">User</div>
<div class="t" style="left:1068px;top:149px">Computer</div>
<div class="a" style="left:446px;top:148px;width:1px;height:19px;background:#808080"></div>
<div class="a" style="left:531px;top:148px;width:1px;height:19px;background:#808080"></div>
<div class="a" style="left:600px;top:148px;width:1px;height:19px;background:#808080"></div>
<div class="a" style="left:685px;top:148px;width:1px;height:19px;background:#808080"></div>
<div class="a" style="left:793px;top:148px;width:1px;height:19px;background:#808080"></div>
<div class="a" style="left:944px;top:148px;width:1px;height:19px;background:#808080"></div>
<div class="a" style="left:1064px;top:148px;width:1px;height:19px;background:#808080"></div>
<div class="a" style="left:1206px;top:148px;width:1px;height:19px;background:#808080"></div>
<div class="a" style="left:282px;top:187px;width:925px;height:1px;background:#c5c5c5"></div>
<svg class="ic" style="left:283px;top:167px" width="20" height="20"><path d="M8.6 11.4 L11.4 8.8 L16.6 14.4 L16.8 17 L15.6 17.8 L14.5 16.9 L13.9 17.4 L12.8 16.2 L13.4 15.4 Z" fill="#e6c65a" stroke="#7a6b3c" stroke-width="0.8" stroke-linejoin="round"/><path fill-rule="evenodd" d="M6.7 2.4 A5.1 5.1 0 1 1 6.7 12.6 A5.1 5.1 0 1 1 6.7 2.4 Z M5 4.8 A1.1 1.1 0 1 0 5 7 A1.1 1.1 0 1 0 5 4.8 Z" fill="#e6c65a" stroke="#7a6b3c" stroke-width="0.8"/></svg>
<div class="t" style="left:306px;top:171px;color:#000;letter-spacing:-0.2px">Audit Success</div>
<div class="t" style="left:450px;width:81px;overflow:hidden;top:171px;color:#000;letter-spacing:-0.3px">10/1/2025</div>
<div class="t" style="left:535px;width:65px;overflow:hidden;top:171px;color:#000;letter-spacing:-0.3px">9:14:21 pm</div>
<div class="t" style="left:600px;width:81px;text-align:right;top:171px;color:#000;letter-spacing:-0.8px">5379</div>
<div class="t" style="left:689px;width:104px;overflow:hidden;top:171px;color:#000;letter-spacing:0.2px">Microsoft-Windows</div>
<div class="t" style="left:797px;width:147px;overflow:hidden;top:171px;color:#000;letter-spacing:0">User Account Management</div>
<div class="t" style="left:948px;width:116px;overflow:hidden;top:171px;color:#000;letter-spacing:0">N/A</div>
<div class="t" style="left:1068px;width:138px;overflow:hidden;top:171px;color:#000;letter-spacing:0">MIKE-LN</div>
<div class="a" style="left:282px;top:207px;width:925px;height:1px;background:#c5c5c5"></div>
<svg class="ic" style="left:283px;top:187px" width="20" height="20"><path d="M8.6 11.4 L11.4 8.8 L16.6 14.4 L16.8 17 L15.6 17.8 L14.5 16.9 L13.9 17.4 L12.8 16.2 L13.4 15.4 Z" fill="#e6c65a" stroke="#7a6b3c" stroke-width="0.8" stroke-linejoin="round"/><path fill-rule="evenodd" d="M6.7 2.4 A5.1 5.1 0 1 1 6.7 12.6 A5.1 5.1 0 1 1 6.7 2.4 Z M5 4.8 A1.1 1.1 0 1 0 5 7 A1.1 1.1 0 1 0 5 4.8 Z" fill="#e6c65a" stroke="#7a6b3c" stroke-width="0.8"/></svg>
<div class="t" style="left:306px;top:191px;color:#000;letter-spacing:-0.2px">Audit Success</div>
<div class="t" style="left:450px;width:81px;overflow:hidden;top:191px;color:#000;letter-spacing:-0.3px">10/1/2025</div>
<div class="t" style="left:535px;width:65px;overflow:hidden;top:191px;color:#000;letter-spacing:-0.3px">9:14:21 pm</div>
<div class="t" style="left:600px;width:81px;text-align:right;top:191px;color:#000;letter-spacing:-0.8px">5379</div>
<div class="t" style="left:689px;width:104px;overflow:hidden;top:191px;color:#000;letter-spacing:0.2px">Microsoft-Windows</div>
<div class="t" style="left:797px;width:147px;overflow:hidden;top:191px;color:#000;letter-spacing:0">User Account Management</div>
<div class="t" style="left:948px;width:116px;overflow:hidden;top:191px;color:#000;letter-spacing:0">N/A</div>
<div class="t" style="left:1068px;width:138px;overflow:hidden;top:191px;color:#000;letter-spacing:0">MIKE-LN</div>
<div class="a" style="left:282px;top:227px;width:925px;height:1px;background:#c5c5c5"></div>
<svg class="ic" style="left:283px;top:207px" width="20" height="20"><path d="M8.6 11.4 L11.4 8.8 L16.6 14.4 L16.8 17 L15.6 17.8 L14.5 16.9 L13.9 17.4 L12.8 16.2 L13.4 15.4 Z" fill="#e6c65a" stroke="#7a6b3c" stroke-width="0.8" stroke-linejoin="round"/><path fill-rule="evenodd" d="M6.7 2.4 A5.1 5.1 0 1 1 6.7 12.6 A5.1 5.1 0 1 1 6.7 2.4 Z M5 4.8 A1.1 1.1 0 1 0 5 7 A1.1 1.1 0 1 0 5 4.8 Z" fill="#e6c65a" stroke="#7a6b3c" stroke-width="0.8"/></svg>
<div class="t" style="left:306px;top:211px;color:#000;letter-spacing:-0.2px">Audit Success</div>
<div class="t" style="left:450px;width:81px;overflow:hidden;top:211px;color:#000;letter-spacing:-0.3px">10/1/2025</div>
<div class="t" style="left:535px;width:65px;overflow:hidden;top:211px;color:#000;letter-spacing:-0.3px">9:14:21 pm</div>
<div class="t" style="left:600px;width:81px;text-align:right;top:211px;color:#000;letter-spacing:-0.8px">5379</div>
<div class="t" style="left:689px;width:104px;overflow:hidden;top:211px;color:#000;letter-spacing:0.2px">Microsoft-Windows</div>
<div class="t" style="left:797px;width:147px;overflow:hidden;top:211px;color:#000;letter-spacing:0">User Account Management</div>
<div class="t" style="left:948px;width:116px;overflow:hidden;top:211px;color:#000;letter-spacing:0">N/A</div>
<div class="t" style="left:1068px;width:138px;overflow:hidden;top:211px;color:#000;letter-spacing:0">MIKE-LN</div>
<div class="a" style="left:282px;top:247px;width:925px;height:1px;background:#c5c5c5"></div>
<svg class="ic" style="left:283px;top:227px" width="20" height="20"><path d="M8.6 11.4 L11.4 8.8 L16.6 14.4 L16.8 17 L15.6 17.8 L14.5 16.9 L13.9 17.4 L12.8 16.2 L13.4 15.4 Z" fill="#e6c65a" stroke="#7a6b3c" stroke-width="0.8" stroke-linejoin="round"/><path fill-rule="evenodd" d="M6.7 2.4 A5.1 5.1 0 1 1 6.7 12.6 A5.1 5.1 0 1 1 6.7 2.4 Z M5 4.8 A1.1 1.1 0 1 0 5 7 A1.1 1.1 0 1 0 5 4.8 Z" fill="#e6c65a" stroke="#7a6b3c" stroke-width="0.8"/></svg>
<div class="t" style="left:306px;top:231px;color:#000;letter-spacing:-0.2px">Audit Success</div>
<div class="t" style="left:450px;width:81px;overflow:hidden;top:231px;color:#000;letter-spacing:-0.3px">10/1/2025</div>
<div class="t" style="left:535px;width:65px;overflow:hidden;top:231px;color:#000;letter-spacing:-0.3px">9:14:20 pm</div>
<div class="t" style="left:600px;width:81px;text-align:right;top:231px;color:#000;letter-spacing:-0.8px">5379</div>
<div class="t" style="left:689px;width:104px;overflow:hidden;top:231px;color:#000;letter-spacing:0.2px">Microsoft-Windows</div>
<div class="t" style="left:797px;width:147px;overflow:hidden;top:231px;color:#000;letter-spacing:0">User Account Management</div>
<div class="t" style="left:948px;width:116px;overflow:hidden;top:231px;color:#000;letter-spacing:0">N/A</div>
<div class="t" style="left:1068px;width:138px;overflow:hidden;top:231px;color:#000;letter-spacing:0">MIKE-LN</div>
<div class="a" style="left:282px;top:267px;width:925px;height:1px;background:#c5c5c5"></div>
<svg class="ic" style="left:283px;top:247px" width="20" height="20"><path d="M8.6 11.4 L11.4 8.8 L16.6 14.4 L16.8 17 L15.6 17.8 L14.5 16.9 L13.9 17.4 L12.8 16.2 L13.4 15.4 Z" fill="#e6c65a" stroke="#7a6b3c" stroke-width="0.8" stroke-linejoin="round"/><path fill-rule="evenodd" d="M6.7 2.4 A5.1 5.1 0 1 1 6.7 12.6 A5.1 5.1 0 1 1 6.7 2.4 Z M5 4.8 A1.1 1.1 0 1 0 5 7 A1.1 1.1 0 1 0 5 4.8 Z" fill="#e6c65a" stroke="#7a6b3c" stroke-width="0.8"/></svg>
<div class="t" style="left:306px;top:251px;color:#000;letter-spacing:-0.2px">Audit Success</div>
<div class="t" style="left:450px;width:81px;overflow:hidden;top:251px;color:#000;letter-spacing:-0.3px">10/1/2025</div>
<div class="t" style="left:535px;width:65px;overflow:hidden;top:251px;color:#000;letter-spacing:-0.3px">9:14:20 pm</div>
<div class="t" style="left:600px;width:81px;text-align:right;top:251px;color:#000;letter-spacing:-0.8px">5379</div>
<div class="t" style="left:689px;width:104px;overflow:hidden;top:251px;color:#000;letter-spacing:0.2px">Microsoft-Windows</div>
<div class="t" style="left:797px;width:147px;overflow:hidden;top:251px;color:#000;letter-spacing:0">User Account Management</div>
<div class="t" style="left:948px;width:116px;overflow:hidden;top:251px;color:#000;letter-spacing:0">N/A</div>
<div class="t" style="left:1068px;width:138px;overflow:hidden;top:251px;color:#000;letter-spacing:0">MIKE-LN</div>
<div class="a" style="left:282px;top:287px;width:925px;height:1px;background:#c5c5c5"></div>
<svg class="ic" style="left:283px;top:267px" width="20" height="20"><path d="M8.6 11.4 L11.4 8.8 L16.6 14.4 L16.8 17 L15.6 17.8 L14.5 16.9 L13.9 17.4 L12.8 16.2 L13.4 15.4 Z" fill="#e6c65a" stroke="#7a6b3c" stroke-width="0.8" stroke-linejoin="round"/><path fill-rule="evenodd" d="M6.7 2.4 A5.1 5.1 0 1 1 6.7 12.6 A5.1 5.1 0 1 1 6.7 2.4 Z M5 4.8 A1.1 1.1 0 1 0 5 7 A1.1 1.1 0 1 0 5 4.8 Z" fill="#e6c65a" stroke="#7a6b3c" stroke-width="0.8"/></svg>
<div class="t" style="left:306px;top:271px;color:#000;letter-spacing:-0.2px">Audit Success</div>
<div class="t" style="left:450px;width:81px;overflow:hidden;top:271px;color:#000;letter-spacing:-0.3px">10/1/2025</div>
<div class="t" style="left:535px;width:65px;overflow:hidden;top:271px;color:#000;letter-spacing:-0.3px">9:14:20 pm</div>
<div class="t" style="left:600px;width:81px;text-align:right;top:271px;color:#000;letter-spacing:-0.8px">5379</div>
<div class="t" style="left:689px;width:104px;overflow:hidden;top:271px;color:#000;letter-spacing:0.2px">Microsoft-Windows</div>
<div class="t" style="left:797px;width:147px;overflow:hidden;top:271px;color:#000;letter-spacing:0">User Account Management</div>
<div class="t" style="left:948px;width:116px;overflow:hidden;top:271px;color:#000;letter-spacing:0">N/A</div>
<div class="t" style="left:1068px;width:138px;overflow:hidden;top:271px;color:#000;letter-spacing:0">MIKE-LN</div>
<div class="a" style="left:282px;top:307px;width:925px;height:1px;background:#c5c5c5"></div>
<svg class="ic" style="left:283px;top:287px" width="20" height="20"><path d="M8.6 11.4 L11.4 8.8 L16.6 14.4 L16.8 17 L15.6 17.8 L14.5 16.9 L13.9 17.4 L12.8 16.2 L13.4 15.4 Z" fill="#e6c65a" stroke="#7a6b3c" stroke-width="0.8" stroke-linejoin="round"/><path fill-rule="evenodd" d="M6.7 2.4 A5.1 5.1 0 1 1 6.7 12.6 A5.1 5.1 0 1 1 6.7 2.4 Z M5 4.8 A1.1 1.1 0 1 0 5 7 A1.1 1.1 0 1 0 5 4.8 Z" fill="#e6c65a" stroke="#7a6b3c" stroke-width="0.8"/></svg>
<div class="t" style="left:306px;top:291px;color:#000;letter-spacing:-0.2px">Audit Success</div>
<div class="t" style="left:450px;width:81px;overflow:hidden;top:291px;color:#000;letter-spacing:-0.3px">10/1/2025</div>
<div class="t" style="left:535px;width:65px;overflow:hidden;top:291px;color:#000;letter-spacing:-0.3px">9:14:20 pm</div>
<div class="t" style="left:600px;width:81px;text-align:right;top:291px;color:#000;letter-spacing:-0.8px">5379</div>
<div class="t" style="left:689px;width:104px;overflow:hidden;top:291px;color:#000;letter-spacing:0.2px">Microsoft-Windows</div>
<div class="t" style="left:797px;width:147px;overflow:hidden;top:291px;color:#000;letter-spacing:0">User Account Management</div>
<div class="t" style="left:948px;width:116px;overflow:hidden;top:291px;color:#000;letter-spacing:0">N/A</div>
<div class="t" style="left:1068px;width:138px;overflow:hidden;top:291px;color:#000;letter-spacing:0">MIKE-LN</div>
<div class="a" style="left:282px;top:327px;width:925px;height:1px;background:#c5c5c5"></div>
<svg class="ic" style="left:283px;top:307px" width="20" height="20"><path d="M8.6 11.4 L11.4 8.8 L16.6 14.4 L16.8 17 L15.6 17.8 L14.5 16.9 L13.9 17.4 L12.8 16.2 L13.4 15.4 Z" fill="#e6c65a" stroke="#7a6b3c" stroke-width="0.8" stroke-linejoin="round"/><path fill-rule="evenodd" d="M6.7 2.4 A5.1 5.1 0 1 1 6.7 12.6 A5.1 5.1 0 1 1 6.7 2.4 Z M5 4.8 A1.1 1.1 0 1 0 5 7 A1.1 1.1 0 1 0 5 4.8 Z" fill="#e6c65a" stroke="#7a6b3c" stroke-width="0.8"/></svg>
<div class="t" style="left:306px;top:311px;color:#000;letter-spacing:-0.2px">Audit Success</div>
<div class="t" style="left:450px;width:81px;overflow:hidden;top:311px;color:#000;letter-spacing:-0.3px">10/1/2025</div>
<div class="t" style="left:535px;width:65px;overflow:hidden;top:311px;color:#000;letter-spacing:-0.3px">9:14:20 pm</div>
<div class="t" style="left:600px;width:81px;text-align:right;top:311px;color:#000;letter-spacing:-0.8px">5379</div>
<div class="t" style="left:689px;width:104px;overflow:hidden;top:311px;color:#000;letter-spacing:0.2px">Microsoft-Windows</div>
<div class="t" style="left:797px;width:147px;overflow:hidden;top:311px;color:#000;letter-spacing:0">User Account Management</div>
<div class="t" style="left:948px;width:116px;overflow:hidden;top:311px;color:#000;letter-spacing:0">N/A</div>
<div class="t" style="left:1068px;width:138px;overflow:hidden;top:311px;color:#000;letter-spacing:0">MIKE-LN</div>
<div class="a" style="left:282px;top:347px;width:925px;height:1px;background:#c5c5c5"></div>
<svg class="ic" style="left:283px;top:327px" width="20" height="20"><path d="M8.6 11.4 L11.4 8.8 L16.6 14.4 L16.8 17 L15.6 17.8 L14.5 16.9 L13.9 17.4 L12.8 16.2 L13.4 15.4 Z" fill="#e6c65a" stroke="#7a6b3c" stroke-width="0.8" stroke-linejoin="round"/><path fill-rule="evenodd" d="M6.7 2.4 A5.1 5.1 0 1 1 6.7 12.6 A5.1 5.1 0 1 1 6.7 2.4 Z M5 4.8 A1.1 1.1 0 1 0 5 7 A1.1 1.1 0 1 0 5 4.8 Z" fill="#e6c65a" stroke="#7a6b3c" stroke-width="0.8"/></svg>
<div class="t" style="left:306px;top:331px;color:#000;letter-spacing:-0.2px">Audit Success</div>
<div class="t" style="left:450px;width:81px;overflow:hidden;top:331px;color:#000;letter-spacing:-0.3px">10/1/2025</div>
<div class="t" style="left:535px;width:65px;overflow:hidden;top:331px;color:#000;letter-spacing:-0.3px">9:14:20 pm</div>
<div class="t" style="left:600px;width:81px;text-align:right;top:331px;color:#000;letter-spacing:-0.8px">5379</div>
<div class="t" style="left:689px;width:104px;overflow:hidden;top:331px;color:#000;letter-spacing:0.2px">Microsoft-Windows</div>
<div class="t" style="left:797px;width:147px;overflow:hidden;top:331px;color:#000;letter-spacing:0">User Account Management</div>
<div class="t" style="left:948px;width:116px;overflow:hidden;top:331px;color:#000;letter-spacing:0">N/A</div>
<div class="t" style="left:1068px;width:138px;overflow:hidden;top:331px;color:#000;letter-spacing:0">MIKE-LN</div>
<div class="a" style="left:282px;top:367px;width:925px;height:1px;background:#c5c5c5"></div>
<svg class="ic" style="left:283px;top:347px" width="20" height="20"><path d="M8.6 11.4 L11.4 8.8 L16.6 14.4 L16.8 17 L15.6 17.8 L14.5 16.9 L13.9 17.4 L12.8 16.2 L13.4 15.4 Z" fill="#e6c65a" stroke="#7a6b3c" stroke-width="0.8" stroke-linejoin="round"/><path fill-rule="evenodd" d="M6.7 2.4 A5.1 5.1 0 1 1 6.7 12.6 A5.1 5.1 0 1 1 6.7 2.4 Z M5 4.8 A1.1 1.1 0 1 0 5 7 A1.1 1.1 0 1 0 5 4.8 Z" fill="#e6c65a" stroke="#7a6b3c" stroke-width="0.8"/></svg>
<div class="t" style="left:306px;top:351px;color:#000;letter-spacing:-0.2px">Audit Success</div>
<div class="t" style="left:450px;width:81px;overflow:hidden;top:351px;color:#000;letter-spacing:-0.3px">10/1/2025</div>
<div class="t" style="left:535px;width:65px;overflow:hidden;top:351px;color:#000;letter-spacing:-0.3px">9:14:20 pm</div>
<div class="t" style="left:600px;width:81px;text-align:right;top:351px;color:#000;letter-spacing:-0.8px">5379</div>
<div class="t" style="left:689px;width:104px;overflow:hidden;top:351px;color:#000;letter-spacing:0.2px">Microsoft-Windows</div>
<div class="t" style="left:797px;width:147px;overflow:hidden;top:351px;color:#000;letter-spacing:0">User Account Management</div>
<div class="t" style="left:948px;width:116px;overflow:hidden;top:351px;color:#000;letter-spacing:0">N/A</div>
<div class="t" style="left:1068px;width:138px;overflow:hidden;top:351px;color:#000;letter-spacing:0">MIKE-LN</div>
<div class="a" style="left:282px;top:387px;width:925px;height:1px;background:#c5c5c5"></div>
<svg class="ic" style="left:283px;top:367px" width="20" height="20"><path d="M8.6 11.4 L11.4 8.8 L16.6 14.4 L16.8 17 L15.6 17.8 L14.5 16.9 L13.9 17.4 L12.8 16.2 L13.4 15.4 Z" fill="#e6c65a" stroke="#7a6b3c" stroke-width="0.8" stroke-linejoin="round"/><path fill-rule="evenodd" d="M6.7 2.4 A5.1 5.1 0 1 1 6.7 12.6 A5.1 5.1 0 1 1 6.7 2.4 Z M5 4.8 A1.1 1.1 0 1 0 5 7 A1.1 1.1 0 1 0 5 4.8 Z" fill="#e6c65a" stroke="#7a6b3c" stroke-width="0.8"/></svg>
<div class="t" style="left:306px;top:371px;color:#000;letter-spacing:-0.2px">Audit Success</div>
<div class="t" style="left:450px;width:81px;overflow:hidden;top:371px;color:#000;letter-spacing:-0.3px">10/1/2025</div>
<div class="t" style="left:535px;width:65px;overflow:hidden;top:371px;color:#000;letter-spacing:-0.3px">9:14:20 pm</div>
<div class="t" style="left:600px;width:81px;text-align:right;top:371px;color:#000;letter-spacing:-0.8px">5379</div>
<div class="t" style="left:689px;width:104px;overflow:hidden;top:371px;color:#000;letter-spacing:0.2px">Microsoft-Windows</div>
<div class="t" style="left:797px;width:147px;overflow:hidden;top:371px;color:#000;letter-spacing:0">User Account Management</div>
<div class="t" style="left:948px;width:116px;overflow:hidden;top:371px;color:#000;letter-spacing:0">N/A</div>
<div class="t" style="left:1068px;width:138px;overflow:hidden;top:371px;color:#000;letter-spacing:0">MIKE-LN</div>
<div class="a" style="left:282px;top:407px;width:925px;height:1px;background:#c5c5c5"></div>
<svg class="ic" style="left:283px;top:387px" width="20" height="20"><path d="M8.6 11.4 L11.4 8.8 L16.6 14.4 L16.8 17 L15.6 17.8 L14.5 16.9 L13.9 17.4 L12.8 16.2 L13.4 15.4 Z" fill="#e6c65a" stroke="#7a6b3c" stroke-width="0.8" stroke-linejoin="round"/><path fill-rule="evenodd" d="M6.7 2.4 A5.1 5.1 0 1 1 6.7 12.6 A5.1 5.1 0 1 1 6.7 2.4 Z M5 4.8 A1.1 1.1 0 1 0 5 7 A1.1 1.1 0 1 0 5 4.8 Z" fill="#e6c65a" stroke="#7a6b3c" stroke-width="0.8"/></svg>
<div class="t" style="left:306px;top:391px;color:#000;letter-spacing:-0.2px">Audit Success</div>
<div class="t" style="left:450px;width:81px;overflow:hidden;top:391px;color:#000;letter-spacing:-0.3px">10/1/2025</div>
<div class="t" style="left:535px;width:65px;overflow:hidden;top:391px;color:#000;letter-spacing:-0.3px">9:14:20 pm</div>
<div class="t" style="left:600px;width:81px;text-align:right;top:391px;color:#000;letter-spacing:-0.8px">5379</div>
<div class="t" style="left:689px;width:104px;overflow:hidden;top:391px;color:#000;letter-spacing:0.2px">Microsoft-Windows</div>
<div class="t" style="left:797px;width:147px;overflow:hidden;top:391px;color:#000;letter-spacing:0">User Account Management</div>
<div class="t" style="left:948px;width:116px;overflow:hidden;top:391px;color:#000;letter-spacing:0">N/A</div>
<div class="t" style="left:1068px;width:138px;overflow:hidden;top:391px;color:#000;letter-spacing:0">MIKE-LN</div>
<div class="a" style="left:282px;top:427px;width:925px;height:1px;background:#c5c5c5"></div>
<svg class="ic" style="left:283px;top:407px" width="20" height="20"><path d="M8.6 11.4 L11.4 8.8 L16.6 14.4 L16.8 17 L15.6 17.8 L14.5 16.9 L13.9 17.4 L12.8 16.2 L13.4 15.4 Z" fill="#e6c65a" stroke="#7a6b3c" stroke-width="0.8" stroke-linejoin="round"/><path fill-rule="evenodd" d="M6.7 2.4 A5.1 5.1 0 1 1 6.7 12.6 A5.1 5.1 0 1 1 6.7 2.4 Z M5 4.8 A1.1 1.1 0 1 0 5 7 A1.1 1.1 0 1 0 5 4.8 Z" fill="#e6c65a" stroke="#7a6b3c" stroke-width="0.8"/></svg>
<div class="t" style="left:306px;top:411px;color:#000;letter-spacing:-0.2px">Audit Success</div>
<div class="t" style="left:450px;width:81px;overflow:hidden;top:411px;color:#000;letter-spacing:-0.3px">10/1/2025</div>
<div class="t" style="left:535px;width:65px;overflow:hidden;top:411px;color:#000;letter-spacing:-0.3px">9:14:20 pm</div>
<div class="t" style="left:600px;width:81px;text-align:right;top:411px;color:#000;letter-spacing:-0.8px">5379</div>
<div class="t" style="left:689px;width:104px;overflow:hidden;top:411px;color:#000;letter-spacing:0.2px">Microsoft-Windows</div>
<div class="t" style="left:797px;width:147px;overflow:hidden;top:411px;color:#000;letter-spacing:0">User Account Management</div>
<div class="t" style="left:948px;width:116px;overflow:hidden;top:411px;color:#000;letter-spacing:0">N/A</div>
<div class="t" style="left:1068px;width:138px;overflow:hidden;top:411px;color:#000;letter-spacing:0">MIKE-LN</div>
<div class="a" style="left:282px;top:447px;width:925px;height:1px;background:#c5c5c5"></div>
<svg class="ic" style="left:283px;top:427px" width="20" height="20"><path d="M8.6 11.4 L11.4 8.8 L16.6 14.4 L16.8 17 L15.6 17.8 L14.5 16.9 L13.9 17.4 L12.8 16.2 L13.4 15.4 Z" fill="#e6c65a" stroke="#7a6b3c" stroke-width="0.8" stroke-linejoin="round"/><path fill-rule="evenodd" d="M6.7 2.4 A5.1 5.1 0 1 1 6.7 12.6 A5.1 5.1 0 1 1 6.7 2.4 Z M5 4.8 A1.1 1.1 0 1 0 5 7 A1.1 1.1 0 1 0 5 4.8 Z" fill="#e6c65a" stroke="#7a6b3c" stroke-width="0.8"/></svg>
<div class="t" style="left:306px;top:431px;color:#000;letter-spacing:-0.2px">Audit Success</div>
<div class="t" style="left:450px;width:81px;overflow:hidden;top:431px;color:#000;letter-spacing:-0.3px">10/1/2025</div>
<div class="t" style="left:535px;width:65px;overflow:hidden;top:431px;color:#000;letter-spacing:-0.3px">9:14:20 pm</div>
<div class="t" style="left:600px;width:81px;text-align:right;top:431px;color:#000;letter-spacing:-0.8px">5379</div>
<div class="t" style="left:689px;width:104px;overflow:hidden;top:431px;color:#000;letter-spacing:0.2px">Microsoft-Windows</div>
<div class="t" style="left:797px;width:147px;overflow:hidden;top:431px;color:#000;letter-spacing:0">User Account Management</div>
<div class="t" style="left:948px;width:116px;overflow:hidden;top:431px;color:#000;letter-spacing:0">N/A</div>
<div class="t" style="left:1068px;width:138px;overflow:hidden;top:431px;color:#000;letter-spacing:0">MIKE-LN</div>
<div class="a" style="left:282px;top:467px;width:925px;height:1px;background:#c5c5c5"></div>
<svg class="ic" style="left:283px;top:447px" width="20" height="20"><path d="M8.6 11.4 L11.4 8.8 L16.6 14.4 L16.8 17 L15.6 17.8 L14.5 16.9 L13.9 17.4 L12.8 16.2 L13.4 15.4 Z" fill="#e6c65a" stroke="#7a6b3c" stroke-width="0.8" stroke-linejoin="round"/><path fill-rule="evenodd" d="M6.7 2.4 A5.1 5.1 0 1 1 6.7 12.6 A5.1 5.1 0 1 1 6.7 2.4 Z M5 4.8 A1.1 1.1 0 1 0 5 7 A1.1 1.1 0 1 0 5 4.8 Z" fill="#e6c65a" stroke="#7a6b3c" stroke-width="0.8"/></svg>
<div class="t" style="left:306px;top:451px;color:#000;letter-spacing:-0.2px">Audit Success</div>
<div class="t" style="left:450px;width:81px;overflow:hidden;top:451px;color:#000;letter-spacing:-0.3px">10/1/2025</div>
<div class="t" style="left:535px;width:65px;overflow:hidden;top:451px;color:#000;letter-spacing:-0.3px">9:14:20 pm</div>
<div class="t" style="left:600px;width:81px;text-align:right;top:451px;color:#000;letter-spacing:-0.8px">4672</div>
<div class="t" style="left:689px;width:104px;overflow:hidden;top:451px;color:#000;letter-spacing:0.2px">Microsoft-Windows</div>
<div class="t" style="left:797px;width:147px;overflow:hidden;top:451px;color:#000;letter-spacing:0">User Account Management</div>
<div class="t" style="left:948px;width:116px;overflow:hidden;top:451px;color:#000;letter-spacing:0">N/A</div>
<div class="t" style="left:1068px;width:138px;overflow:hidden;top:451px;color:#000;letter-spacing:0">MIKE-LN</div>
<div class="a" style="left:282px;top:468px;width:925px;height:19px;background:#0a74d6;outline:1px dotted #c08040;outline-offset:-1px"></div>
<div class="a" style="left:282px;top:487px;width:925px;height:1px;background:#c5c5c5"></div>
<svg class="ic" style="left:283px;top:467px" width="20" height="20"><path d="M8.6 11.4 L11.4 8.8 L16.6 14.4 L16.8 17 L15.6 17.8 L14.5 16.9 L13.9 17.4 L12.8 16.2 L13.4 15.4 Z" fill="#e6c65a" stroke="#7a6b3c" stroke-width="0.8" stroke-linejoin="round"/><path fill-rule="evenodd" d="M6.7 2.4 A5.1 5.1 0 1 1 6.7 12.6 A5.1 5.1 0 1 1 6.7 2.4 Z M5 4.8 A1.1 1.1 0 1 0 5 7 A1.1 1.1 0 1 0 5 4.8 Z" fill="#e6c65a" stroke="#7a6b3c" stroke-width="0.8"/></svg>
<div class="t" style="left:306px;top:471px;color:#fff;letter-spacing:-0.2px">Audit Success</div>
<div class="t" style="left:450px;width:81px;overflow:hidden;top:471px;color:#fff;letter-spacing:-0.3px">10/1/2025</div>
<div class="t" style="left:535px;width:65px;overflow:hidden;top:471px;color:#fff;letter-spacing:-0.3px">9:14:20 pm</div>
<div class="t" style="left:600px;width:81px;text-align:right;top:471px;color:#fff;letter-spacing:-0.8px">4624</div>
<div class="t" style="left:689px;width:104px;overflow:hidden;top:471px;color:#fff;letter-spacing:0.2px">Microsoft-Windows</div>
<div class="t" style="left:797px;width:147px;overflow:hidden;top:471px;color:#fff;letter-spacing:0">User Account Management</div>
<div class="t" style="left:948px;width:116px;overflow:hidden;top:471px;color:#fff;letter-spacing:0">N/A</div>
<div class="t" style="left:1068px;width:138px;overflow:hidden;top:471px;color:#fff;letter-spacing:0">MIKE-LN</div>
<div class="a" style="left:282px;top:507px;width:925px;height:1px;background:#c5c5c5"></div>
<svg class="ic" style="left:283px;top:487px" width="20" height="20"><path d="M8.6 11.4 L11.4 8.8 L16.6 14.4 L16.8 17 L15.6 17.8 L14.5 16.9 L13.9 17.4 L12.8 16.2 L13.4 15.4 Z" fill="#e6c65a" stroke="#7a6b3c" stroke-width="0.8" stroke-linejoin="round"/><path fill-rule="evenodd" d="M6.7 2.4 A5.1 5.1 0 1 1 6.7 12.6 A5.1 5.1 0 1 1 6.7 2.4 Z M5 4.8 A1.1 1.1 0 1 0 5 7 A1.1 1.1 0 1 0 5 4.8 Z" fill="#e6c65a" stroke="#7a6b3c" stroke-width="0.8"/></svg>
<div class="t" style="left:306px;top:491px;color:#000;letter-spacing:-0.2px">Audit Success</div>
<div class="t" style="left:450px;width:81px;overflow:hidden;top:491px;color:#000;letter-spacing:-0.3px">10/1/2025</div>
<div class="t" style="left:535px;width:65px;overflow:hidden;top:491px;color:#000;letter-spacing:-0.3px">9:09:25 pm</div>
<div class="t" style="left:600px;width:81px;text-align:right;top:491px;color:#000;letter-spacing:-0.8px">4672</div>
<div class="t" style="left:689px;width:104px;overflow:hidden;top:491px;color:#000;letter-spacing:0.2px">Microsoft-Windows</div>
<div class="t" style="left:797px;width:147px;overflow:hidden;top:491px;color:#000;letter-spacing:0">User Account Management</div>
<div class="t" style="left:948px;width:116px;overflow:hidden;top:491px;color:#000;letter-spacing:0">N/A</div>
<div class="t" style="left:1068px;width:138px;overflow:hidden;top:491px;color:#000;letter-spacing:0">MIKE-LN</div>
<div class="a" style="left:282px;top:527px;width:925px;height:1px;background:#c5c5c5"></div>
<svg class="ic" style="left:283px;top:507px" width="20" height="20"><path d="M8.6 11.4 L11.4 8.8 L16.6 14.4 L16.8 17 L15.6 17.8 L14.5 16.9 L13.9 17.4 L12.8 16.2 L13.4 15.4 Z" fill="#e6c65a" stroke="#7a6b3c" stroke-width="0.8" stroke-linejoin="round"/><path fill-rule="evenodd" d="M6.7 2.4 A5.1 5.1 0 1 1 6.7 12.6 A5.1 5.1 0 1 1 6.7 2.4 Z M5 4.8 A1.1 1.1 0 1 0 5 7 A1.1 1.1 0 1 0 5 4.8 Z" fill="#e6c65a" stroke="#7a6b3c" stroke-width="0.8"/></svg>
<div class="t" style="left:306px;top:511px;color:#000;letter-spacing:-0.2px">Audit Success</div>
<div class="t" style="left:450px;width:81px;overflow:hidden;top:511px;color:#000;letter-spacing:-0.3px">10/1/2025</div>
<div class="t" style="left:535px;width:65px;overflow:hidden;top:511px;color:#000;letter-spacing:-0.3px">9:09:25 pm</div>
<div class="t" style="left:600px;width:81px;text-align:right;top:511px;color:#000;letter-spacing:-0.8px">4624</div>
<div class="t" style="left:689px;width:104px;overflow:hidden;top:511px;color:#000;letter-spacing:0.2px">Microsoft-Windows</div>
<div class="t" style="left:797px;width:147px;overflow:hidden;top:511px;color:#000;letter-spacing:0">User Account Management</div>
<div class="t" style="left:948px;width:116px;overflow:hidden;top:511px;color:#000;letter-spacing:0">N/A</div>
<div class="t" style="left:1068px;width:138px;overflow:hidden;top:511px;color:#000;letter-spacing:0">MIKE-LN</div>
<div class="a" style="left:282px;top:547px;width:925px;height:1px;background:#c5c5c5"></div>
<svg class="ic" style="left:283px;top:527px" width="20" height="20"><path d="M8.6 11.4 L11.4 8.8 L16.6 14.4 L16.8 17 L15.6 17.8 L14.5 16.9 L13.9 17.4 L12.8 16.2 L13.4 15.4 Z" fill="#e6c65a" stroke="#7a6b3c" stroke-width="0.8" stroke-linejoin="round"/><path fill-rule="evenodd" d="M6.7 2.4 A5.1 5.1 0 1 1 6.7 12.6 A5.1 5.1 0 1 1 6.7 2.4 Z M5 4.8 A1.1 1.1 0 1 0 5 7 A1.1 1.1 0 1 0 5 4.8 Z" fill="#e6c65a" stroke="#7a6b3c" stroke-width="0.8"/></svg>
<div class="t" style="left:306px;top:531px;color:#000;letter-spacing:-0.2px">Audit Success</div>
<div class="t" style="left:450px;width:81px;overflow:hidden;top:531px;color:#000;letter-spacing:-0.3px">10/1/2025</div>
<div class="t" style="left:535px;width:65px;overflow:hidden;top:531px;color:#000;letter-spacing:-0.3px">9:04:14 pm</div>
<div class="t" style="left:600px;width:81px;text-align:right;top:531px;color:#000;letter-spacing:-0.8px">4672</div>
<div class="t" style="left:689px;width:104px;overflow:hidden;top:531px;color:#000;letter-spacing:0.2px">Microsoft-Windows</div>
<div class="t" style="left:797px;width:147px;overflow:hidden;top:531px;color:#000;letter-spacing:0">User Account Management</div>
<div class="t" style="left:948px;width:116px;overflow:hidden;top:531px;color:#000;letter-spacing:0">N/A</div>
<div class="t" style="left:1068px;width:138px;overflow:hidden;top:531px;color:#000;letter-spacing:0">MIKE-LN</div>
<div class="a" style="left:282px;top:567px;width:925px;height:1px;background:#c5c5c5"></div>
<svg class="ic" style="left:283px;top:547px" width="20" height="20"><path d="M8.6 11.4 L11.4 8.8 L16.6 14.4 L16.8 17 L15.6 17.8 L14.5 16.9 L13.9 17.4 L12.8 16.2 L13.4 15.4 Z" fill="#e6c65a" stroke="#7a6b3c" stroke-width="0.8" stroke-linejoin="round"/><path fill-rule="evenodd" d="M6.7 2.4 A5.1 5.1 0 1 1 6.7 12.6 A5.1 5.1 0 1 1 6.7 2.4 Z M5 4.8 A1.1 1.1 0 1 0 5 7 A1.1 1.1 0 1 0 5 4.8 Z" fill="#e6c65a" stroke="#7a6b3c" stroke-width="0.8"/></svg>
<div class="t" style="left:306px;top:551px;color:#000;letter-spacing:-0.2px">Audit Success</div>
<div class="t" style="left:450px;width:81px;overflow:hidden;top:551px;color:#000;letter-spacing:-0.3px">10/1/2025</div>
<div class="t" style="left:535px;width:65px;overflow:hidden;top:551px;color:#000;letter-spacing:-0.3px">9:04:14 pm</div>
<div class="t" style="left:600px;width:81px;text-align:right;top:551px;color:#000;letter-spacing:-0.8px">4624</div>
<div class="t" style="left:689px;width:104px;overflow:hidden;top:551px;color:#000;letter-spacing:0.2px">Microsoft-Windows</div>
<div class="t" style="left:797px;width:147px;overflow:hidden;top:551px;color:#000;letter-spacing:0">User Account Management</div>
<div class="t" style="left:948px;width:116px;overflow:hidden;top:551px;color:#000;letter-spacing:0">N/A</div>
<div class="t" style="left:1068px;width:138px;overflow:hidden;top:551px;color:#000;letter-spacing:0">MIKE-LN</div>
<div class="a" style="left:282px;top:587px;width:925px;height:1px;background:#c5c5c5"></div>
<svg class="ic" style="left:283px;top:567px" width="20" height="20"><path d="M8.6 11.4 L11.4 8.8 L16.6 14.4 L16.8 17 L15.6 17.8 L14.5 16.9 L13.9 17.4 L12.8 16.2 L13.4 15.4 Z" fill="#e6c65a" stroke="#7a6b3c" stroke-width="0.8" stroke-linejoin="round"/><path fill-rule="evenodd" d="M6.7 2.4 A5.1 5.1 0 1 1 6.7 12.6 A5.1 5.1 0 1 1 6.7 2.4 Z M5 4.8 A1.1 1.1 0 1 0 5 7 A1.1 1.1 0 1 0 5 4.8 Z" fill="#e6c65a" stroke="#7a6b3c" stroke-width="0.8"/></svg>
<div class="t" style="left:306px;top:571px;color:#000;letter-spacing:-0.2px">Audit Success</div>
<div class="t" style="left:450px;width:81px;overflow:hidden;top:571px;color:#000;letter-spacing:-0.3px">10/1/2025</div>
<div class="t" style="left:535px;width:65px;overflow:hidden;top:571px;color:#000;letter-spacing:-0.3px">9:02:42 pm</div>
<div class="t" style="left:600px;width:81px;text-align:right;top:571px;color:#000;letter-spacing:-0.8px">4672</div>
<div class="t" style="left:689px;width:104px;overflow:hidden;top:571px;color:#000;letter-spacing:0.2px">Microsoft-Windows</div>
<div class="t" style="left:797px;width:147px;overflow:hidden;top:571px;color:#000;letter-spacing:0">User Account Management</div>
<div class="t" style="left:948px;width:116px;overflow:hidden;top:571px;color:#000;letter-spacing:0">N/A</div>
<div class="t" style="left:1068px;width:138px;overflow:hidden;top:571px;color:#000;letter-spacing:0">MIKE-LN</div>
<div class="a" style="left:282px;top:607px;width:925px;height:1px;background:#c5c5c5"></div>
<svg class="ic" style="left:283px;top:587px" width="20" height="20"><path d="M8.6 11.4 L11.4 8.8 L16.6 14.4 L16.8 17 L15.6 17.8 L14.5 16.9 L13.9 17.4 L12.8 16.2 L13.4 15.4 Z" fill="#e6c65a" stroke="#7a6b3c" stroke-width="0.8" stroke-linejoin="round"/><path fill-rule="evenodd" d="M6.7 2.4 A5.1 5.1 0 1 1 6.7 12.6 A5.1 5.1 0 1 1 6.7 2.4 Z M5 4.8 A1.1 1.1 0 1 0 5 7 A1.1 1.1 0 1 0 5 4.8 Z" fill="#e6c65a" stroke="#7a6b3c" stroke-width="0.8"/></svg>
<div class="t" style="left:306px;top:591px;color:#000;letter-spacing:-0.2px">Audit Success</div>
<div class="t" style="left:450px;width:81px;overflow:hidden;top:591px;color:#000;letter-spacing:-0.3px">10/1/2025</div>
<div class="t" style="left:535px;width:65px;overflow:hidden;top:591px;color:#000;letter-spacing:-0.3px">9:02:42 pm</div>
<div class="t" style="left:600px;width:81px;text-align:right;top:591px;color:#000;letter-spacing:-0.8px">4624</div>
<div class="t" style="left:689px;width:104px;overflow:hidden;top:591px;color:#000;letter-spacing:0.2px">Microsoft-Windows</div>
<div class="t" style="left:797px;width:147px;overflow:hidden;top:591px;color:#000;letter-spacing:0">User Account Management</div>
<div class="t" style="left:948px;width:116px;overflow:hidden;top:591px;color:#000;letter-spacing:0">N/A</div>
<div class="t" style="left:1068px;width:138px;overflow:hidden;top:591px;color:#000;letter-spacing:0">MIKE-LN</div>
<div class="a" style="left:282px;top:627px;width:925px;height:1px;background:#c5c5c5"></div>
<svg class="ic" style="left:283px;top:607px" width="20" height="20"><path d="M8.6 11.4 L11.4 8.8 L16.6 14.4 L16.8 17 L15.6 17.8 L14.5 16.9 L13.9 17.4 L12.8 16.2 L13.4 15.4 Z" fill="#e6c65a" stroke="#7a6b3c" stroke-width="0.8" stroke-linejoin="round"/><path fill-rule="evenodd" d="M6.7 2.4 A5.1 5.1 0 1 1 6.7 12.6 A5.1 5.1 0 1 1 6.7 2.4 Z M5 4.8 A1.1 1.1 0 1 0 5 7 A1.1 1.1 0 1 0 5 4.8 Z" fill="#e6c65a" stroke="#7a6b3c" stroke-width="0.8"/></svg>
<div class="t" style="left:306px;top:611px;color:#000;letter-spacing:-0.2px">Audit Success</div>
<div class="t" style="left:450px;width:81px;overflow:hidden;top:611px;color:#000;letter-spacing:-0.3px">10/1/2025</div>
<div class="t" style="left:535px;width:65px;overflow:hidden;top:611px;color:#000;letter-spacing:-0.3px">9:02:42 pm</div>
<div class="t" style="left:600px;width:81px;text-align:right;top:611px;color:#000;letter-spacing:-0.8px">5379</div>
<div class="t" style="left:689px;width:104px;overflow:hidden;top:611px;color:#000;letter-spacing:0.2px">Microsoft-Windows</div>
<div class="t" style="left:797px;width:147px;overflow:hidden;top:611px;color:#000;letter-spacing:0">User Account Management</div>
<div class="t" style="left:948px;width:116px;overflow:hidden;top:611px;color:#000;letter-spacing:0">N/A</div>
<div class="t" style="left:1068px;width:138px;overflow:hidden;top:611px;color:#000;letter-spacing:0">MIKE-LN</div>
<div class="a" style="left:282px;top:647px;width:925px;height:1px;background:#c5c5c5"></div>
<svg class="ic" style="left:283px;top:627px" width="20" height="20"><path d="M8.6 11.4 L11.4 8.8 L16.6 14.4 L16.8 17 L15.6 17.8 L14.5 16.9 L13.9 17.4 L12.8 16.2 L13.4 15.4 Z" fill="#e6c65a" stroke="#7a6b3c" stroke-width="0.8" stroke-linejoin="round"/><path fill-rule="evenodd" d="M6.7 2.4 A5.1 5.1 0 1 1 6.7 12.6 A5.1 5.1 0 1 1 6.7 2.4 Z M5 4.8 A1.1 1.1 0 1 0 5 7 A1.1 1.1 0 1 0 5 4.8 Z" fill="#e6c65a" stroke="#7a6b3c" stroke-width="0.8"/></svg>
<div class="t" style="left:306px;top:631px;color:#000;letter-spacing:-0.2px">Audit Success</div>
<div class="t" style="left:450px;width:81px;overflow:hidden;top:631px;color:#000;letter-spacing:-0.3px">10/1/2025</div>
<div class="t" style="left:535px;width:65px;overflow:hidden;top:631px;color:#000;letter-spacing:-0.3px">9:02:42 pm</div>
<div class="t" style="left:600px;width:81px;text-align:right;top:631px;color:#000;letter-spacing:-0.8px">5379</div>
<div class="t" style="left:689px;width:104px;overflow:hidden;top:631px;color:#000;letter-spacing:0.2px">Microsoft-Windows</div>
<div class="t" style="left:797px;width:147px;overflow:hidden;top:631px;color:#000;letter-spacing:0">User Account Management</div>
<div class="t" style="left:948px;width:116px;overflow:hidden;top:631px;color:#000;letter-spacing:0">N/A</div>
<div class="t" style="left:1068px;width:138px;overflow:hidden;top:631px;color:#000;letter-spacing:0">MIKE-LN</div>
<div class="a" style="left:282px;top:667px;width:925px;height:1px;background:#c5c5c5"></div>
<svg class="ic" style="left:283px;top:647px" width="20" height="20"><path d="M8.6 11.4 L11.4 8.8 L16.6 14.4 L16.8 17 L15.6 17.8 L14.5 16.9 L13.9 17.4 L12.8 16.2 L13.4 15.4 Z" fill="#e6c65a" stroke="#7a6b3c" stroke-width="0.8" stroke-linejoin="round"/><path fill-rule="evenodd" d="M6.7 2.4 A5.1 5.1 0 1 1 6.7 12.6 A5.1 5.1 0 1 1 6.7 2.4 Z M5 4.8 A1.1 1.1 0 1 0 5 7 A1.1 1.1 0 1 0 5 4.8 Z" fill="#e6c65a" stroke="#7a6b3c" stroke-width="0.8"/></svg>
<div class="t" style="left:306px;top:651px;color:#000;letter-spacing:-0.2px">Audit Success</div>
<div class="t" style="left:450px;width:81px;overflow:hidden;top:651px;color:#000;letter-spacing:-0.3px">10/1/2025</div>
<div class="t" style="left:535px;width:65px;overflow:hidden;top:651px;color:#000;letter-spacing:-0.3px">9:02:42 pm</div>
<div class="t" style="left:600px;width:81px;text-align:right;top:651px;color:#000;letter-spacing:-0.8px">5379</div>
<div class="t" style="left:689px;width:104px;overflow:hidden;top:651px;color:#000;letter-spacing:0.2px">Microsoft-Windows</div>
<div class="t" style="left:797px;width:147px;overflow:hidden;top:651px;color:#000;letter-spacing:0">User Account Management</div>
<div class="t" style="left:948px;width:116px;overflow:hidden;top:651px;color:#000;letter-spacing:0">N/A</div>
<div class="t" style="left:1068px;width:138px;overflow:hidden;top:651px;color:#000;letter-spacing:0">MIKE-LN</div>
<div class="a" style="left:282px;top:687px;width:925px;height:1px;background:#c5c5c5"></div>
<svg class="ic" style="left:283px;top:667px" width="20" height="20"><path d="M8.6 11.4 L11.4 8.8 L16.6 14.4 L16.8 17 L15.6 17.8 L14.5 16.9 L13.9 17.4 L12.8 16.2 L13.4 15.4 Z" fill="#e6c65a" stroke="#7a6b3c" stroke-width="0.8" stroke-linejoin="round"/><path fill-rule="evenodd" d="M6.7 2.4 A5.1 5.1 0 1 1 6.7 12.6 A5.1 5.1 0 1 1 6.7 2.4 Z M5 4.8 A1.1 1.1 0 1 0 5 7 A1.1 1.1 0 1 0 5 4.8 Z" fill="#e6c65a" stroke="#7a6b3c" stroke-width="0.8"/></svg>
<div class="t" style="left:306px;top:671px;color:#000;letter-spacing:-0.2px">Audit Success</div>
<div class="t" style="left:450px;width:81px;overflow:hidden;top:671px;color:#000;letter-spacing:-0.3px">10/1/2025</div>
<div class="t" style="left:535px;width:65px;overflow:hidden;top:671px;color:#000;letter-spacing:-0.3px">9:02:42 pm</div>
<div class="t" style="left:600px;width:81px;text-align:right;top:671px;color:#000;letter-spacing:-0.8px">5379</div>
<div class="t" style="left:689px;width:104px;overflow:hidden;top:671px;color:#000;letter-spacing:0.2px">Microsoft-Windows</div>
<div class="t" style="left:797px;width:147px;overflow:hidden;top:671px;color:#000;letter-spacing:0">User Account Management</div>
<div class="t" style="left:948px;width:116px;overflow:hidden;top:671px;color:#000;letter-spacing:0">N/A</div>
<div class="t" style="left:1068px;width:138px;overflow:hidden;top:671px;color:#000;letter-spacing:0">MIKE-LN</div>
<div class="a" style="left:282px;top:707px;width:925px;height:1px;background:#c5c5c5"></div>
<svg class="ic" style="left:283px;top:687px" width="20" height="20"><path d="M8.6 11.4 L11.4 8.8 L16.6 14.4 L16.8 17 L15.6 17.8 L14.5 16.9 L13.9 17.4 L12.8 16.2 L13.4 15.4 Z" fill="#e6c65a" stroke="#7a6b3c" stroke-width="0.8" stroke-linejoin="round"/><path fill-rule="evenodd" d="M6.7 2.4 A5.1 5.1 0 1 1 6.7 12.6 A5.1 5.1 0 1 1 6.7 2.4 Z M5 4.8 A1.1 1.1 0 1 0 5 7 A1.1 1.1 0 1 0 5 4.8 Z" fill="#e6c65a" stroke="#7a6b3c" stroke-width="0.8"/></svg>
<div class="t" style="left:306px;top:691px;color:#000;letter-spacing:-0.2px">Audit Success</div>
<div class="t" style="left:450px;width:81px;overflow:hidden;top:691px;color:#000;letter-spacing:-0.3px">10/1/2025</div>
<div class="t" style="left:535px;width:65px;overflow:hidden;top:691px;color:#000;letter-spacing:-0.3px">9:02:42 pm</div>
<div class="t" style="left:600px;width:81px;text-align:right;top:691px;color:#000;letter-spacing:-0.8px">5379</div>
<div class="t" style="left:689px;width:104px;overflow:hidden;top:691px;color:#000;letter-spacing:0.2px">Microsoft-Windows</div>
<div class="t" style="left:797px;width:147px;overflow:hidden;top:691px;color:#000;letter-spacing:0">User Account Management</div>
<div class="t" style="left:948px;width:116px;overflow:hidden;top:691px;color:#000;letter-spacing:0">N/A</div>
<div class="t" style="left:1068px;width:138px;overflow:hidden;top:691px;color:#000;letter-spacing:0">MIKE-LN</div>
<div class="a" style="left:446px;top:168px;width:1px;height:540px;background:#c5c5c5"></div>
<div class="a" style="left:531px;top:168px;width:1px;height:540px;background:#c5c5c5"></div>
<div class="a" style="left:600px;top:168px;width:1px;height:540px;background:#c5c5c5"></div>
<div class="a" style="left:685px;top:168px;width:1px;height:540px;background:#c5c5c5"></div>
<div class="a" style="left:793px;top:168px;width:1px;height:540px;background:#c5c5c5"></div>
<div class="a" style="left:944px;top:168px;width:1px;height:540px;background:#c5c5c5"></div>
<div class="a" style="left:1064px;top:168px;width:1px;height:540px;background:#c5c5c5"></div>
<div class="a" style="left:1206px;top:168px;width:1px;height:540px;background:#c5c5c5"></div>
<div class="t" style="left:284px;top:734px;font-weight:bold">Description</div>
<svg class="ic" style="left:1212px;top:735px" width="9" height="8" viewBox="0 0 9 8"><path d="M0.6 0.5 L8 7.5 M8 0.5 L0.6 7.5" stroke="#000" stroke-width="1.5"/></svg>
<div class="a" style="left:281px;top:754px;width:949px;height:130px;background:#dadbdd"></div><div class="a" style="left:281px;top:886px;width:950px;height:2px;background:#dadbdd"></div>
<div class="a" style="left:284px;top:757px;width:943px;height:105px;background:#fff;border:1px solid #ececec;border-bottom:1px solid #808080"></div>
<div class="a" style="left:1209px;top:760px;width:16px;height:100px;background:#efefef"></div>
<div class="a" style="left:1216px;top:777px;width:2px;height:16px;background:#777"></div>
<div class="a" style="left:284px;top:757px;width:926px;height:104px;overflow:hidden">
<div class="t" style="left:3px;top:5px;color:#333">An account was successfully logged on.</div>
<div class="t" style="left:3px;top:35px;color:#333">Subject:</div>
<div class="t" style="left:51px;top:50px;color:#333">Security ID:</div>
<div class="t" style="left:195px;top:50px;color:#333">S-1-5-18</div>
<div class="t" style="left:51px;top:65px;color:#333">Account Name:</div>
<div class="t" style="left:195px;top:65px;color:#333">MIKE-LN$</div>
<div class="t" style="left:51px;top:80px;color:#333">Account Domain:</div>
<div class="t" style="left:195px;top:80px;color:#333">WORKGROUP</div>
<div class="t" style="left:51px;top:95px;color:#333">Logon ID:</div>
<div class="t" style="left:195px;top:95px;color:#333">0x3e7</div>
</div>
<svg class="ic" style="left:284px;top:862px" width="140" height="20" viewBox="0 0 140 20"><path d="M4 0 L82 0 L77 18 L9 18 Z" fill="#fff"/><path d="M82 0 L125.6 0 L121 18 L87 18 Z" fill="#e9e9ea"/></svg>
<div class="t" style="left:298px;top:863px">Description</div>
<div class="t" style="left:377px;top:863px">Data</div>
</body></html>
